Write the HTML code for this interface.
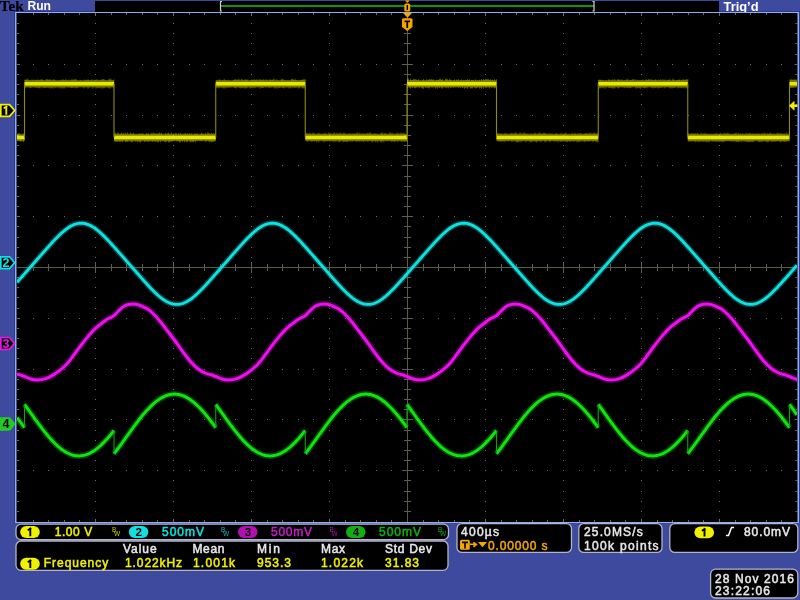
<!DOCTYPE html><html><head><meta charset="utf-8"><style>html,body{margin:0;padding:0;background:#3d4a9e;overflow:hidden}svg{display:block;will-change:transform}text{font-family:"Liberation Sans",sans-serif}</style></head><body>
<svg width="800" height="600" viewBox="0 0 800 600">
<rect x="0" y="0" width="800" height="600" fill="#3d4a9e"/>
<rect x="14" y="11" width="786" height="512" fill="#2c3690"/>
<text x="-0.2" y="11.4" font-weight="bold" font-size="15.6" fill="#000" stroke="#000" stroke-width="0.2" textLength="23.8" lengthAdjust="spacingAndGlyphs" style="font-family:'Liberation Serif'">Tek</text>
<text x="27.5" y="10" font-weight="bold" font-size="12" fill="#fff" textLength="23.5" lengthAdjust="spacingAndGlyphs">Run</text>
<rect x="95" y="1" width="624" height="11" fill="#000"/>
<rect x="221" y="5" width="373" height="2" fill="#109010"/>
<path d="M222,1.5 L220.5,1.5 L220.5,11 L222,11" stroke="#d8d0d0" stroke-width="1.2" fill="none"/>
<path d="M592.5,1.5 L594,1.5 L594,11 L592.5,11" stroke="#d8d0d0" stroke-width="1.2" fill="none"/>
<text x="723.5" y="10.5" font-weight="bold" font-size="12" fill="#fff" textLength="35" lengthAdjust="spacingAndGlyphs">Trig’d</text>
<rect x="15" y="12" width="784" height="511" fill="#8fb0f0"/>
<rect x="16.5" y="13" width="781" height="509" fill="#000"/>
<path d="M95,23h1v1h-1zM95,33h1v1h-1zM95,43h1v1h-1zM95,54h1v1h-1zM95,64h1v1h-1zM95,74h1v1h-1zM95,84h1v1h-1zM95,94h1v1h-1zM95,104h1v1h-1zM95,115h1v1h-1zM95,125h1v1h-1zM95,135h1v1h-1zM95,145h1v1h-1zM95,155h1v1h-1zM95,165h1v1h-1zM95,176h1v1h-1zM95,186h1v1h-1zM95,196h1v1h-1zM95,206h1v1h-1zM95,216h1v1h-1zM95,226h1v1h-1zM95,237h1v1h-1zM95,247h1v1h-1zM95,257h1v1h-1zM95,267h1v1h-1zM95,277h1v1h-1zM95,287h1v1h-1zM95,297h1v1h-1zM95,308h1v1h-1zM95,318h1v1h-1zM95,328h1v1h-1zM95,338h1v1h-1zM95,348h1v1h-1zM95,358h1v1h-1zM95,369h1v1h-1zM95,379h1v1h-1zM95,389h1v1h-1zM95,399h1v1h-1zM95,409h1v1h-1zM95,419h1v1h-1zM95,430h1v1h-1zM95,440h1v1h-1zM95,450h1v1h-1zM95,460h1v1h-1zM95,470h1v1h-1zM95,480h1v1h-1zM95,491h1v1h-1zM95,501h1v1h-1zM95,511h1v1h-1zM173,23h1v1h-1zM173,33h1v1h-1zM173,43h1v1h-1zM173,54h1v1h-1zM173,64h1v1h-1zM173,74h1v1h-1zM173,84h1v1h-1zM173,94h1v1h-1zM173,104h1v1h-1zM173,115h1v1h-1zM173,125h1v1h-1zM173,135h1v1h-1zM173,145h1v1h-1zM173,155h1v1h-1zM173,165h1v1h-1zM173,176h1v1h-1zM173,186h1v1h-1zM173,196h1v1h-1zM173,206h1v1h-1zM173,216h1v1h-1zM173,226h1v1h-1zM173,237h1v1h-1zM173,247h1v1h-1zM173,257h1v1h-1zM173,267h1v1h-1zM173,277h1v1h-1zM173,287h1v1h-1zM173,297h1v1h-1zM173,308h1v1h-1zM173,318h1v1h-1zM173,328h1v1h-1zM173,338h1v1h-1zM173,348h1v1h-1zM173,358h1v1h-1zM173,369h1v1h-1zM173,379h1v1h-1zM173,389h1v1h-1zM173,399h1v1h-1zM173,409h1v1h-1zM173,419h1v1h-1zM173,430h1v1h-1zM173,440h1v1h-1zM173,450h1v1h-1zM173,460h1v1h-1zM173,470h1v1h-1zM173,480h1v1h-1zM173,491h1v1h-1zM173,501h1v1h-1zM173,511h1v1h-1zM251,23h1v1h-1zM251,33h1v1h-1zM251,43h1v1h-1zM251,54h1v1h-1zM251,64h1v1h-1zM251,74h1v1h-1zM251,84h1v1h-1zM251,94h1v1h-1zM251,104h1v1h-1zM251,115h1v1h-1zM251,125h1v1h-1zM251,135h1v1h-1zM251,145h1v1h-1zM251,155h1v1h-1zM251,165h1v1h-1zM251,176h1v1h-1zM251,186h1v1h-1zM251,196h1v1h-1zM251,206h1v1h-1zM251,216h1v1h-1zM251,226h1v1h-1zM251,237h1v1h-1zM251,247h1v1h-1zM251,257h1v1h-1zM251,267h1v1h-1zM251,277h1v1h-1zM251,287h1v1h-1zM251,297h1v1h-1zM251,308h1v1h-1zM251,318h1v1h-1zM251,328h1v1h-1zM251,338h1v1h-1zM251,348h1v1h-1zM251,358h1v1h-1zM251,369h1v1h-1zM251,379h1v1h-1zM251,389h1v1h-1zM251,399h1v1h-1zM251,409h1v1h-1zM251,419h1v1h-1zM251,430h1v1h-1zM251,440h1v1h-1zM251,450h1v1h-1zM251,460h1v1h-1zM251,470h1v1h-1zM251,480h1v1h-1zM251,491h1v1h-1zM251,501h1v1h-1zM251,511h1v1h-1zM329,23h1v1h-1zM329,33h1v1h-1zM329,43h1v1h-1zM329,54h1v1h-1zM329,64h1v1h-1zM329,74h1v1h-1zM329,84h1v1h-1zM329,94h1v1h-1zM329,104h1v1h-1zM329,115h1v1h-1zM329,125h1v1h-1zM329,135h1v1h-1zM329,145h1v1h-1zM329,155h1v1h-1zM329,165h1v1h-1zM329,176h1v1h-1zM329,186h1v1h-1zM329,196h1v1h-1zM329,206h1v1h-1zM329,216h1v1h-1zM329,226h1v1h-1zM329,237h1v1h-1zM329,247h1v1h-1zM329,257h1v1h-1zM329,267h1v1h-1zM329,277h1v1h-1zM329,287h1v1h-1zM329,297h1v1h-1zM329,308h1v1h-1zM329,318h1v1h-1zM329,328h1v1h-1zM329,338h1v1h-1zM329,348h1v1h-1zM329,358h1v1h-1zM329,369h1v1h-1zM329,379h1v1h-1zM329,389h1v1h-1zM329,399h1v1h-1zM329,409h1v1h-1zM329,419h1v1h-1zM329,430h1v1h-1zM329,440h1v1h-1zM329,450h1v1h-1zM329,460h1v1h-1zM329,470h1v1h-1zM329,480h1v1h-1zM329,491h1v1h-1zM329,501h1v1h-1zM329,511h1v1h-1zM485,23h1v1h-1zM485,33h1v1h-1zM485,43h1v1h-1zM485,54h1v1h-1zM485,64h1v1h-1zM485,74h1v1h-1zM485,84h1v1h-1zM485,94h1v1h-1zM485,104h1v1h-1zM485,115h1v1h-1zM485,125h1v1h-1zM485,135h1v1h-1zM485,145h1v1h-1zM485,155h1v1h-1zM485,165h1v1h-1zM485,176h1v1h-1zM485,186h1v1h-1zM485,196h1v1h-1zM485,206h1v1h-1zM485,216h1v1h-1zM485,226h1v1h-1zM485,237h1v1h-1zM485,247h1v1h-1zM485,257h1v1h-1zM485,267h1v1h-1zM485,277h1v1h-1zM485,287h1v1h-1zM485,297h1v1h-1zM485,308h1v1h-1zM485,318h1v1h-1zM485,328h1v1h-1zM485,338h1v1h-1zM485,348h1v1h-1zM485,358h1v1h-1zM485,369h1v1h-1zM485,379h1v1h-1zM485,389h1v1h-1zM485,399h1v1h-1zM485,409h1v1h-1zM485,419h1v1h-1zM485,430h1v1h-1zM485,440h1v1h-1zM485,450h1v1h-1zM485,460h1v1h-1zM485,470h1v1h-1zM485,480h1v1h-1zM485,491h1v1h-1zM485,501h1v1h-1zM485,511h1v1h-1zM563,23h1v1h-1zM563,33h1v1h-1zM563,43h1v1h-1zM563,54h1v1h-1zM563,64h1v1h-1zM563,74h1v1h-1zM563,84h1v1h-1zM563,94h1v1h-1zM563,104h1v1h-1zM563,115h1v1h-1zM563,125h1v1h-1zM563,135h1v1h-1zM563,145h1v1h-1zM563,155h1v1h-1zM563,165h1v1h-1zM563,176h1v1h-1zM563,186h1v1h-1zM563,196h1v1h-1zM563,206h1v1h-1zM563,216h1v1h-1zM563,226h1v1h-1zM563,237h1v1h-1zM563,247h1v1h-1zM563,257h1v1h-1zM563,267h1v1h-1zM563,277h1v1h-1zM563,287h1v1h-1zM563,297h1v1h-1zM563,308h1v1h-1zM563,318h1v1h-1zM563,328h1v1h-1zM563,338h1v1h-1zM563,348h1v1h-1zM563,358h1v1h-1zM563,369h1v1h-1zM563,379h1v1h-1zM563,389h1v1h-1zM563,399h1v1h-1zM563,409h1v1h-1zM563,419h1v1h-1zM563,430h1v1h-1zM563,440h1v1h-1zM563,450h1v1h-1zM563,460h1v1h-1zM563,470h1v1h-1zM563,480h1v1h-1zM563,491h1v1h-1zM563,501h1v1h-1zM563,511h1v1h-1zM641,23h1v1h-1zM641,33h1v1h-1zM641,43h1v1h-1zM641,54h1v1h-1zM641,64h1v1h-1zM641,74h1v1h-1zM641,84h1v1h-1zM641,94h1v1h-1zM641,104h1v1h-1zM641,115h1v1h-1zM641,125h1v1h-1zM641,135h1v1h-1zM641,145h1v1h-1zM641,155h1v1h-1zM641,165h1v1h-1zM641,176h1v1h-1zM641,186h1v1h-1zM641,196h1v1h-1zM641,206h1v1h-1zM641,216h1v1h-1zM641,226h1v1h-1zM641,237h1v1h-1zM641,247h1v1h-1zM641,257h1v1h-1zM641,267h1v1h-1zM641,277h1v1h-1zM641,287h1v1h-1zM641,297h1v1h-1zM641,308h1v1h-1zM641,318h1v1h-1zM641,328h1v1h-1zM641,338h1v1h-1zM641,348h1v1h-1zM641,358h1v1h-1zM641,369h1v1h-1zM641,379h1v1h-1zM641,389h1v1h-1zM641,399h1v1h-1zM641,409h1v1h-1zM641,419h1v1h-1zM641,430h1v1h-1zM641,440h1v1h-1zM641,450h1v1h-1zM641,460h1v1h-1zM641,470h1v1h-1zM641,480h1v1h-1zM641,491h1v1h-1zM641,501h1v1h-1zM641,511h1v1h-1zM719,23h1v1h-1zM719,33h1v1h-1zM719,43h1v1h-1zM719,54h1v1h-1zM719,64h1v1h-1zM719,74h1v1h-1zM719,84h1v1h-1zM719,94h1v1h-1zM719,104h1v1h-1zM719,115h1v1h-1zM719,125h1v1h-1zM719,135h1v1h-1zM719,145h1v1h-1zM719,155h1v1h-1zM719,165h1v1h-1zM719,176h1v1h-1zM719,186h1v1h-1zM719,196h1v1h-1zM719,206h1v1h-1zM719,216h1v1h-1zM719,226h1v1h-1zM719,237h1v1h-1zM719,247h1v1h-1zM719,257h1v1h-1zM719,267h1v1h-1zM719,277h1v1h-1zM719,287h1v1h-1zM719,297h1v1h-1zM719,308h1v1h-1zM719,318h1v1h-1zM719,328h1v1h-1zM719,338h1v1h-1zM719,348h1v1h-1zM719,358h1v1h-1zM719,369h1v1h-1zM719,379h1v1h-1zM719,389h1v1h-1zM719,399h1v1h-1zM719,409h1v1h-1zM719,419h1v1h-1zM719,430h1v1h-1zM719,440h1v1h-1zM719,450h1v1h-1zM719,460h1v1h-1zM719,470h1v1h-1zM719,480h1v1h-1zM719,491h1v1h-1zM719,501h1v1h-1zM719,511h1v1h-1zM33,64h1v1h-1zM48,64h1v1h-1zM64,64h1v1h-1zM79,64h1v1h-1zM111,64h1v1h-1zM126,64h1v1h-1zM142,64h1v1h-1zM157,64h1v1h-1zM189,64h1v1h-1zM204,64h1v1h-1zM220,64h1v1h-1zM235,64h1v1h-1zM267,64h1v1h-1zM282,64h1v1h-1zM298,64h1v1h-1zM313,64h1v1h-1zM345,64h1v1h-1zM360,64h1v1h-1zM376,64h1v1h-1zM391,64h1v1h-1zM423,64h1v1h-1zM438,64h1v1h-1zM454,64h1v1h-1zM469,64h1v1h-1zM501,64h1v1h-1zM516,64h1v1h-1zM532,64h1v1h-1zM547,64h1v1h-1zM579,64h1v1h-1zM594,64h1v1h-1zM610,64h1v1h-1zM625,64h1v1h-1zM657,64h1v1h-1zM672,64h1v1h-1zM688,64h1v1h-1zM703,64h1v1h-1zM735,64h1v1h-1zM750,64h1v1h-1zM766,64h1v1h-1zM781,64h1v1h-1zM33,115h1v1h-1zM48,115h1v1h-1zM64,115h1v1h-1zM79,115h1v1h-1zM111,115h1v1h-1zM126,115h1v1h-1zM142,115h1v1h-1zM157,115h1v1h-1zM189,115h1v1h-1zM204,115h1v1h-1zM220,115h1v1h-1zM235,115h1v1h-1zM267,115h1v1h-1zM282,115h1v1h-1zM298,115h1v1h-1zM313,115h1v1h-1zM345,115h1v1h-1zM360,115h1v1h-1zM376,115h1v1h-1zM391,115h1v1h-1zM423,115h1v1h-1zM438,115h1v1h-1zM454,115h1v1h-1zM469,115h1v1h-1zM501,115h1v1h-1zM516,115h1v1h-1zM532,115h1v1h-1zM547,115h1v1h-1zM579,115h1v1h-1zM594,115h1v1h-1zM610,115h1v1h-1zM625,115h1v1h-1zM657,115h1v1h-1zM672,115h1v1h-1zM688,115h1v1h-1zM703,115h1v1h-1zM735,115h1v1h-1zM750,115h1v1h-1zM766,115h1v1h-1zM781,115h1v1h-1zM33,165h1v1h-1zM48,165h1v1h-1zM64,165h1v1h-1zM79,165h1v1h-1zM111,165h1v1h-1zM126,165h1v1h-1zM142,165h1v1h-1zM157,165h1v1h-1zM189,165h1v1h-1zM204,165h1v1h-1zM220,165h1v1h-1zM235,165h1v1h-1zM267,165h1v1h-1zM282,165h1v1h-1zM298,165h1v1h-1zM313,165h1v1h-1zM345,165h1v1h-1zM360,165h1v1h-1zM376,165h1v1h-1zM391,165h1v1h-1zM423,165h1v1h-1zM438,165h1v1h-1zM454,165h1v1h-1zM469,165h1v1h-1zM501,165h1v1h-1zM516,165h1v1h-1zM532,165h1v1h-1zM547,165h1v1h-1zM579,165h1v1h-1zM594,165h1v1h-1zM610,165h1v1h-1zM625,165h1v1h-1zM657,165h1v1h-1zM672,165h1v1h-1zM688,165h1v1h-1zM703,165h1v1h-1zM735,165h1v1h-1zM750,165h1v1h-1zM766,165h1v1h-1zM781,165h1v1h-1zM33,216h1v1h-1zM48,216h1v1h-1zM64,216h1v1h-1zM79,216h1v1h-1zM111,216h1v1h-1zM126,216h1v1h-1zM142,216h1v1h-1zM157,216h1v1h-1zM189,216h1v1h-1zM204,216h1v1h-1zM220,216h1v1h-1zM235,216h1v1h-1zM267,216h1v1h-1zM282,216h1v1h-1zM298,216h1v1h-1zM313,216h1v1h-1zM345,216h1v1h-1zM360,216h1v1h-1zM376,216h1v1h-1zM391,216h1v1h-1zM423,216h1v1h-1zM438,216h1v1h-1zM454,216h1v1h-1zM469,216h1v1h-1zM501,216h1v1h-1zM516,216h1v1h-1zM532,216h1v1h-1zM547,216h1v1h-1zM579,216h1v1h-1zM594,216h1v1h-1zM610,216h1v1h-1zM625,216h1v1h-1zM657,216h1v1h-1zM672,216h1v1h-1zM688,216h1v1h-1zM703,216h1v1h-1zM735,216h1v1h-1zM750,216h1v1h-1zM766,216h1v1h-1zM781,216h1v1h-1zM33,318h1v1h-1zM48,318h1v1h-1zM64,318h1v1h-1zM79,318h1v1h-1zM111,318h1v1h-1zM126,318h1v1h-1zM142,318h1v1h-1zM157,318h1v1h-1zM189,318h1v1h-1zM204,318h1v1h-1zM220,318h1v1h-1zM235,318h1v1h-1zM267,318h1v1h-1zM282,318h1v1h-1zM298,318h1v1h-1zM313,318h1v1h-1zM345,318h1v1h-1zM360,318h1v1h-1zM376,318h1v1h-1zM391,318h1v1h-1zM423,318h1v1h-1zM438,318h1v1h-1zM454,318h1v1h-1zM469,318h1v1h-1zM501,318h1v1h-1zM516,318h1v1h-1zM532,318h1v1h-1zM547,318h1v1h-1zM579,318h1v1h-1zM594,318h1v1h-1zM610,318h1v1h-1zM625,318h1v1h-1zM657,318h1v1h-1zM672,318h1v1h-1zM688,318h1v1h-1zM703,318h1v1h-1zM735,318h1v1h-1zM750,318h1v1h-1zM766,318h1v1h-1zM781,318h1v1h-1zM33,369h1v1h-1zM48,369h1v1h-1zM64,369h1v1h-1zM79,369h1v1h-1zM111,369h1v1h-1zM126,369h1v1h-1zM142,369h1v1h-1zM157,369h1v1h-1zM189,369h1v1h-1zM204,369h1v1h-1zM220,369h1v1h-1zM235,369h1v1h-1zM267,369h1v1h-1zM282,369h1v1h-1zM298,369h1v1h-1zM313,369h1v1h-1zM345,369h1v1h-1zM360,369h1v1h-1zM376,369h1v1h-1zM391,369h1v1h-1zM423,369h1v1h-1zM438,369h1v1h-1zM454,369h1v1h-1zM469,369h1v1h-1zM501,369h1v1h-1zM516,369h1v1h-1zM532,369h1v1h-1zM547,369h1v1h-1zM579,369h1v1h-1zM594,369h1v1h-1zM610,369h1v1h-1zM625,369h1v1h-1zM657,369h1v1h-1zM672,369h1v1h-1zM688,369h1v1h-1zM703,369h1v1h-1zM735,369h1v1h-1zM750,369h1v1h-1zM766,369h1v1h-1zM781,369h1v1h-1zM33,419h1v1h-1zM48,419h1v1h-1zM64,419h1v1h-1zM79,419h1v1h-1zM111,419h1v1h-1zM126,419h1v1h-1zM142,419h1v1h-1zM157,419h1v1h-1zM189,419h1v1h-1zM204,419h1v1h-1zM220,419h1v1h-1zM235,419h1v1h-1zM267,419h1v1h-1zM282,419h1v1h-1zM298,419h1v1h-1zM313,419h1v1h-1zM345,419h1v1h-1zM360,419h1v1h-1zM376,419h1v1h-1zM391,419h1v1h-1zM423,419h1v1h-1zM438,419h1v1h-1zM454,419h1v1h-1zM469,419h1v1h-1zM501,419h1v1h-1zM516,419h1v1h-1zM532,419h1v1h-1zM547,419h1v1h-1zM579,419h1v1h-1zM594,419h1v1h-1zM610,419h1v1h-1zM625,419h1v1h-1zM657,419h1v1h-1zM672,419h1v1h-1zM688,419h1v1h-1zM703,419h1v1h-1zM735,419h1v1h-1zM750,419h1v1h-1zM766,419h1v1h-1zM781,419h1v1h-1zM33,470h1v1h-1zM48,470h1v1h-1zM64,470h1v1h-1zM79,470h1v1h-1zM111,470h1v1h-1zM126,470h1v1h-1zM142,470h1v1h-1zM157,470h1v1h-1zM189,470h1v1h-1zM204,470h1v1h-1zM220,470h1v1h-1zM235,470h1v1h-1zM267,470h1v1h-1zM282,470h1v1h-1zM298,470h1v1h-1zM313,470h1v1h-1zM345,470h1v1h-1zM360,470h1v1h-1zM376,470h1v1h-1zM391,470h1v1h-1zM423,470h1v1h-1zM438,470h1v1h-1zM454,470h1v1h-1zM469,470h1v1h-1zM501,470h1v1h-1zM516,470h1v1h-1zM532,470h1v1h-1zM547,470h1v1h-1zM579,470h1v1h-1zM594,470h1v1h-1zM610,470h1v1h-1zM625,470h1v1h-1zM657,470h1v1h-1zM672,470h1v1h-1zM688,470h1v1h-1zM703,470h1v1h-1zM735,470h1v1h-1zM750,470h1v1h-1zM766,470h1v1h-1zM781,470h1v1h-1z" fill="#6a6a66"/>
<path d="M33.5,13v2.0M33.5,522v-2.0M48.5,13v2.0M48.5,522v-2.0M64.5,13v2.0M64.5,522v-2.0M79.5,13v2.0M79.5,522v-2.0M95.5,13v3.0M95.5,522v-3.0M111.5,13v2.0M111.5,522v-2.0M126.5,13v2.0M126.5,522v-2.0M142.5,13v2.0M142.5,522v-2.0M157.5,13v2.0M157.5,522v-2.0M173.5,13v3.0M173.5,522v-3.0M189.5,13v2.0M189.5,522v-2.0M204.5,13v2.0M204.5,522v-2.0M220.5,13v2.0M220.5,522v-2.0M235.5,13v2.0M235.5,522v-2.0M251.5,13v3.0M251.5,522v-3.0M267.5,13v2.0M267.5,522v-2.0M282.5,13v2.0M282.5,522v-2.0M298.5,13v2.0M298.5,522v-2.0M313.5,13v2.0M313.5,522v-2.0M329.5,13v3.0M329.5,522v-3.0M345.5,13v2.0M345.5,522v-2.0M360.5,13v2.0M360.5,522v-2.0M376.5,13v2.0M376.5,522v-2.0M391.5,13v2.0M391.5,522v-2.0M407.5,13v3.0M407.5,522v-3.0M423.5,13v2.0M423.5,522v-2.0M438.5,13v2.0M438.5,522v-2.0M454.5,13v2.0M454.5,522v-2.0M469.5,13v2.0M469.5,522v-2.0M485.5,13v3.0M485.5,522v-3.0M501.5,13v2.0M501.5,522v-2.0M516.5,13v2.0M516.5,522v-2.0M532.5,13v2.0M532.5,522v-2.0M547.5,13v2.0M547.5,522v-2.0M563.5,13v3.0M563.5,522v-3.0M579.5,13v2.0M579.5,522v-2.0M594.5,13v2.0M594.5,522v-2.0M610.5,13v2.0M610.5,522v-2.0M625.5,13v2.0M625.5,522v-2.0M641.5,13v3.0M641.5,522v-3.0M657.5,13v2.0M657.5,522v-2.0M672.5,13v2.0M672.5,522v-2.0M688.5,13v2.0M688.5,522v-2.0M703.5,13v2.0M703.5,522v-2.0M719.5,13v3.0M719.5,522v-3.0M735.5,13v2.0M735.5,522v-2.0M750.5,13v2.0M750.5,522v-2.0M766.5,13v2.0M766.5,522v-2.0M781.5,13v2.0M781.5,522v-2.0M17,23.5h2.0M797.5,23.5h-2.0M17,33.5h2.0M797.5,33.5h-2.0M17,43.5h2.0M797.5,43.5h-2.0M17,54.5h2.0M797.5,54.5h-2.0M17,64.5h3.0M797.5,64.5h-3.0M17,74.5h2.0M797.5,74.5h-2.0M17,84.5h2.0M797.5,84.5h-2.0M17,94.5h2.0M797.5,94.5h-2.0M17,104.5h2.0M797.5,104.5h-2.0M17,115.5h3.0M797.5,115.5h-3.0M17,125.5h2.0M797.5,125.5h-2.0M17,135.5h2.0M797.5,135.5h-2.0M17,145.5h2.0M797.5,145.5h-2.0M17,155.5h2.0M797.5,155.5h-2.0M17,165.5h3.0M797.5,165.5h-3.0M17,176.5h2.0M797.5,176.5h-2.0M17,186.5h2.0M797.5,186.5h-2.0M17,196.5h2.0M797.5,196.5h-2.0M17,206.5h2.0M797.5,206.5h-2.0M17,216.5h3.0M797.5,216.5h-3.0M17,226.5h2.0M797.5,226.5h-2.0M17,237.5h2.0M797.5,237.5h-2.0M17,247.5h2.0M797.5,247.5h-2.0M17,257.5h2.0M797.5,257.5h-2.0M17,267.5h3.0M797.5,267.5h-3.0M17,277.5h2.0M797.5,277.5h-2.0M17,287.5h2.0M797.5,287.5h-2.0M17,297.5h2.0M797.5,297.5h-2.0M17,308.5h2.0M797.5,308.5h-2.0M17,318.5h3.0M797.5,318.5h-3.0M17,328.5h2.0M797.5,328.5h-2.0M17,338.5h2.0M797.5,338.5h-2.0M17,348.5h2.0M797.5,348.5h-2.0M17,358.5h2.0M797.5,358.5h-2.0M17,369.5h3.0M797.5,369.5h-3.0M17,379.5h2.0M797.5,379.5h-2.0M17,389.5h2.0M797.5,389.5h-2.0M17,399.5h2.0M797.5,399.5h-2.0M17,409.5h2.0M797.5,409.5h-2.0M17,419.5h3.0M797.5,419.5h-3.0M17,430.5h2.0M797.5,430.5h-2.0M17,440.5h2.0M797.5,440.5h-2.0M17,450.5h2.0M797.5,450.5h-2.0M17,460.5h2.0M797.5,460.5h-2.0M17,470.5h3.0M797.5,470.5h-3.0M17,480.5h2.0M797.5,480.5h-2.0M17,491.5h2.0M797.5,491.5h-2.0M17,501.5h2.0M797.5,501.5h-2.0M17,511.5h2.0M797.5,511.5h-2.0" stroke="#6a6a66" stroke-width="1" fill="none"/>
<path d="M17,267.5H797M407.5,13V522" stroke="#5a5c40" stroke-width="1" fill="none"/>
<path d="M33.5,264.0v7.0M48.5,264.0v7.0M64.5,264.0v7.0M79.5,264.0v7.0M95.5,262.0v11.0M111.5,264.0v7.0M126.5,264.0v7.0M142.5,264.0v7.0M157.5,264.0v7.0M173.5,262.0v11.0M189.5,264.0v7.0M204.5,264.0v7.0M220.5,264.0v7.0M235.5,264.0v7.0M251.5,262.0v11.0M267.5,264.0v7.0M282.5,264.0v7.0M298.5,264.0v7.0M313.5,264.0v7.0M329.5,262.0v11.0M345.5,264.0v7.0M360.5,264.0v7.0M376.5,264.0v7.0M391.5,264.0v7.0M407.5,262.0v11.0M423.5,264.0v7.0M438.5,264.0v7.0M454.5,264.0v7.0M469.5,264.0v7.0M485.5,262.0v11.0M501.5,264.0v7.0M516.5,264.0v7.0M532.5,264.0v7.0M547.5,264.0v7.0M563.5,262.0v11.0M579.5,264.0v7.0M594.5,264.0v7.0M610.5,264.0v7.0M625.5,264.0v7.0M641.5,262.0v11.0M657.5,264.0v7.0M672.5,264.0v7.0M688.5,264.0v7.0M703.5,264.0v7.0M719.5,262.0v11.0M735.5,264.0v7.0M750.5,264.0v7.0M766.5,264.0v7.0M781.5,264.0v7.0M404.0,23.5h7.0M404.0,33.5h7.0M404.0,43.5h7.0M404.0,54.5h7.0M402.0,64.5h11.0M404.0,74.5h7.0M404.0,84.5h7.0M404.0,94.5h7.0M404.0,104.5h7.0M402.0,115.5h11.0M404.0,125.5h7.0M404.0,135.5h7.0M404.0,145.5h7.0M404.0,155.5h7.0M402.0,165.5h11.0M404.0,176.5h7.0M404.0,186.5h7.0M404.0,196.5h7.0M404.0,206.5h7.0M402.0,216.5h11.0M404.0,226.5h7.0M404.0,237.5h7.0M404.0,247.5h7.0M404.0,257.5h7.0M402.0,267.5h11.0M404.0,277.5h7.0M404.0,287.5h7.0M404.0,297.5h7.0M404.0,308.5h7.0M402.0,318.5h11.0M404.0,328.5h7.0M404.0,338.5h7.0M404.0,348.5h7.0M404.0,358.5h7.0M402.0,369.5h11.0M404.0,379.5h7.0M404.0,389.5h7.0M404.0,399.5h7.0M404.0,409.5h7.0M402.0,419.5h11.0M404.0,430.5h7.0M404.0,440.5h7.0M404.0,450.5h7.0M404.0,460.5h7.0M402.0,470.5h11.0M404.0,480.5h7.0M404.0,491.5h7.0M404.0,501.5h7.0M404.0,511.5h7.0" stroke="#5e5e52" stroke-width="1" fill="none"/>
<clipPath id="gc"><rect x="17" y="13" width="780" height="509"/></clipPath>
<g fill="none" stroke-linejoin="round" stroke-linecap="butt" clip-path="url(#gc)">
<path d="M17.5,133.92V140.63M18.5,133.14V140.46M19.5,133.41V141.10M20.5,134.56V141.42M21.5,134.61V141.25M22.5,134.53V140.50M23.5,133.68V142.12M24.5,134.40V140.79M25.0,79.49V88.68M26.0,79.61V87.47M27.0,78.66V86.70M28.0,78.94V87.24M29.0,80.65V86.86M30.0,80.26V88.40M31.0,80.57V87.88M32.0,79.47V87.42M33.0,79.69V86.74M34.0,80.86V87.05M35.0,79.37V87.54M36.0,80.25V87.89M37.0,79.91V87.26M38.0,79.09V88.14M39.0,80.41V87.86M40.0,79.74V88.53M41.0,79.25V87.23M42.0,78.65V86.86M43.0,80.00V88.27M44.0,80.64V87.68M45.0,80.91V88.07M46.0,79.17V87.86M47.0,78.90V87.29M48.0,79.33V87.91M49.0,79.61V87.60M50.0,78.98V88.68M51.0,79.86V88.06M52.0,80.85V88.14M53.0,79.45V88.78M54.0,79.03V87.23M55.0,80.07V88.07M56.0,80.95V87.62M57.0,80.60V86.86M58.0,80.86V88.29M59.0,80.69V87.14M60.0,80.06V88.52M61.0,80.81V87.59M62.0,79.68V88.54M63.0,79.03V88.50M64.0,80.33V87.51M65.0,80.14V88.55M66.0,78.70V86.93M67.0,80.58V87.11M68.0,80.44V87.67M69.0,79.59V87.18M70.0,80.99V87.52M71.0,80.11V87.85M72.0,78.71V88.12M73.0,79.76V87.96M74.0,79.38V86.72M75.0,78.84V88.32M76.0,78.90V88.36M77.0,80.06V87.48M78.0,80.75V88.00M79.0,80.85V86.75M80.0,80.50V86.96M81.0,80.18V86.72M82.0,81.00V86.93M83.0,80.76V87.40M84.0,80.94V88.52M85.0,79.53V86.93M86.0,80.39V87.36M87.0,80.13V86.87M88.0,78.96V88.78M89.0,79.88V87.66M90.0,80.79V86.82M91.0,80.18V87.18M92.0,79.01V86.96M93.0,80.94V88.69M94.0,79.73V86.92M95.0,79.70V86.66M96.0,79.73V88.75M97.0,78.93V88.13M98.0,80.37V87.41M99.0,80.60V88.30M100.0,79.72V88.31M101.0,80.21V87.09M102.0,79.05V88.77M103.0,78.95V88.37M104.0,79.04V88.23M105.0,80.46V87.74M106.0,80.15V86.66M107.0,80.93V87.21M108.0,80.38V88.12M109.0,78.70V87.58M110.0,78.75V88.77M111.0,78.71V87.40M112.0,80.47V87.10M113.0,80.53V87.05M114.0,79.50V88.58M114.5,132.68V141.35M115.5,133.13V142.06M116.5,134.50V141.75M117.5,132.52V142.02M118.5,132.90V141.35M119.5,134.27V142.04M120.5,133.90V142.06M121.5,132.37V141.17M122.5,133.74V142.38M123.5,132.96V140.67M124.5,134.40V140.63M125.5,132.53V142.07M126.5,134.35V142.12M127.5,132.35V141.75M128.5,133.86V141.51M129.5,134.39V140.33M130.5,132.37V141.73M131.5,133.44V142.35M132.5,133.66V142.22M133.5,132.72V140.76M134.5,134.10V140.94M135.5,134.12V141.59M136.5,134.08V141.22M137.5,134.39V142.30M138.5,133.85V141.31M139.5,133.30V142.29M140.5,133.69V142.32M141.5,133.50V141.47M142.5,133.44V140.34M143.5,133.64V140.70M144.5,134.69V142.06M145.5,134.29V141.34M146.5,132.96V141.52M147.5,133.92V141.44M148.5,133.37V142.03M149.5,134.45V141.53M150.5,134.10V140.91M151.5,132.85V141.42M152.5,133.35V141.97M153.5,132.51V141.28M154.5,133.23V141.41M155.5,133.47V141.82M156.5,133.61V141.47M157.5,133.55V142.37M158.5,133.02V142.23M159.5,132.44V140.87M160.5,133.36V142.38M161.5,132.68V140.60M162.5,134.41V141.27M163.5,134.53V140.83M164.5,134.52V141.77M165.5,132.82V142.27M166.5,134.33V141.88M167.5,133.12V140.61M168.5,132.58V142.43M169.5,134.17V142.40M170.5,133.74V141.37M171.5,132.32V142.13M172.5,134.31V141.25M173.5,133.46V141.05M174.5,134.23V141.00M175.5,132.97V140.34M176.5,133.37V141.27M177.5,134.66V141.03M178.5,133.20V141.43M179.5,134.55V142.47M180.5,132.81V142.44M181.5,134.45V140.88M182.5,134.60V142.01M183.5,134.05V140.59M184.5,133.69V142.31M185.5,132.73V140.87M186.5,134.34V142.32M187.5,133.33V141.84M188.5,134.49V140.43M189.5,133.05V141.24M190.5,134.53V142.36M191.5,133.18V142.06M192.5,134.50V142.18M193.5,134.54V142.20M194.5,133.61V141.05M195.5,133.37V142.34M196.5,134.06V140.58M197.5,133.44V140.82M198.5,134.44V140.66M199.5,134.58V140.74M200.5,133.95V140.97M201.5,132.88V140.94M202.5,133.50V140.69M203.5,133.87V140.34M204.5,134.10V140.33M205.5,132.94V141.51M206.5,134.25V141.34M207.5,132.46V140.53M208.5,132.73V141.25M209.5,133.51V142.14M210.5,133.76V141.41M211.5,133.05V142.46M212.5,133.88V142.13M213.5,133.00V141.70M214.5,133.73V141.06M215.5,134.57V140.59M216.2,80.83V88.23M217.2,80.39V86.96M218.2,80.80V88.45M219.2,78.91V88.08M220.2,80.32V87.13M221.2,80.30V87.61M222.2,80.62V87.58M223.2,80.37V88.72M224.2,78.67V87.80M225.2,80.41V88.72M226.2,80.26V87.38M227.2,81.00V87.44M228.2,79.86V87.71M229.2,80.52V87.71M230.2,80.99V87.18M231.2,80.78V87.48M232.2,80.90V86.65M233.2,80.27V87.11M234.2,79.59V87.76M235.2,79.20V88.05M236.2,79.28V88.53M237.2,80.07V87.32M238.2,78.64V86.93M239.2,79.26V88.02M240.2,80.89V88.44M241.2,78.86V87.98M242.2,79.24V88.39M243.2,80.67V87.75M244.2,79.79V88.44M245.2,79.07V88.42M246.2,79.60V88.56M247.2,79.36V88.13M248.2,80.45V86.67M249.2,80.68V87.39M250.2,80.75V88.44M251.2,79.66V87.98M252.2,79.50V88.10M253.2,79.83V86.61M254.2,79.09V88.25M255.2,79.79V87.78M256.2,79.42V86.75M257.2,79.23V87.15M258.2,80.82V87.18M259.2,79.25V87.05M260.2,79.22V88.75M261.2,79.81V87.44M262.2,79.85V88.10M263.2,79.16V87.96M264.2,79.46V86.77M265.2,80.65V87.16M266.2,79.22V87.27M267.2,79.64V86.63M268.2,80.85V87.19M269.2,79.39V88.12M270.2,79.38V87.24M271.2,79.76V87.62M272.2,79.88V86.86M273.2,78.86V87.04M274.2,78.65V88.66M275.2,80.96V87.61M276.2,79.03V88.73M277.2,79.92V87.19M278.2,80.50V88.68M279.2,80.49V87.88M280.2,80.66V87.75M281.2,78.71V86.89M282.2,79.03V87.72M283.2,78.87V88.15M284.2,80.44V88.57M285.2,79.83V86.65M286.2,80.99V87.68M287.2,79.92V87.26M288.2,80.66V87.36M289.2,80.24V88.45M290.2,81.00V88.25M291.2,78.99V86.86M292.2,78.78V88.17M293.2,78.84V87.24M294.2,80.11V87.46M295.2,78.60V87.90M296.2,80.13V87.54M297.2,80.34V86.71M298.2,80.76V88.44M299.2,80.31V88.66M300.2,80.40V87.18M301.2,79.77V87.02M302.2,80.10V88.70M303.2,78.88V88.39M304.2,79.49V88.61M305.2,78.74V87.81M305.8,132.97V140.41M306.8,132.94V141.29M307.8,132.89V141.72M308.8,134.01V140.41M309.8,132.48V140.58M310.8,133.57V141.06M311.8,133.99V141.93M312.8,132.36V140.87M313.8,133.13V140.96M314.8,133.36V141.17M315.8,134.30V140.66M316.8,134.20V142.29M317.8,133.51V140.78M318.8,132.52V142.49M319.8,133.62V140.61M320.8,134.24V140.50M321.8,133.88V140.50M322.8,134.13V140.87M323.8,133.33V142.25M324.8,132.90V141.21M325.8,133.71V141.45M326.8,133.80V141.04M327.8,134.55V140.91M328.8,132.38V140.58M329.8,133.49V141.69M330.8,132.63V140.78M331.8,134.05V140.85M332.8,133.74V141.28M333.8,132.41V142.17M334.8,132.61V140.35M335.8,134.62V141.86M336.8,132.55V141.34M337.8,133.29V140.30M338.8,133.76V142.34M339.8,132.72V142.18M340.8,132.37V140.85M341.8,134.44V140.64M342.8,133.45V141.80M343.8,132.44V141.89M344.8,133.15V141.98M345.8,133.60V141.51M346.8,134.61V142.02M347.8,134.14V142.32M348.8,133.15V140.97M349.8,134.39V140.85M350.8,133.17V141.84M351.8,134.43V140.45M352.8,133.44V141.58M353.8,133.77V140.79M354.8,133.26V140.32M355.8,133.98V141.31M356.8,132.40V141.72M357.8,132.58V141.35M358.8,134.14V140.84M359.8,132.39V141.85M360.8,133.96V140.35M361.8,133.50V141.78M362.8,133.69V140.87M363.8,133.10V142.34M364.8,134.16V140.38M365.8,133.89V141.23M366.8,133.06V140.74M367.8,132.79V141.93M368.8,133.49V140.75M369.8,132.37V140.99M370.8,132.73V140.81M371.8,134.17V141.97M372.8,133.99V142.39M373.8,133.51V140.71M374.8,134.16V141.22M375.8,133.10V142.39M376.8,134.35V141.17M377.8,134.19V142.44M378.8,134.36V140.41M379.8,134.56V141.17M380.8,132.54V142.24M381.8,132.94V142.49M382.8,132.46V141.02M383.8,134.25V142.36M384.8,132.91V140.37M385.8,133.11V141.13M386.8,133.80V141.03M387.8,134.29V140.31M388.8,134.03V141.07M389.8,132.41V140.57M390.8,132.39V140.76M391.8,133.84V142.11M392.8,132.73V141.25M393.8,134.58V141.34M394.8,133.81V142.32M395.8,134.24V141.10M396.8,132.55V140.37M397.8,133.71V142.09M398.8,132.86V140.39M399.8,134.62V140.44M400.8,132.49V140.87M401.8,132.91V142.28M402.8,133.89V140.90M403.8,132.40V141.66M404.8,134.07V141.88M405.8,133.94V140.91M406.8,134.69V141.96M407.5,78.80V87.99M408.5,78.74V86.65M409.5,80.44V87.65M410.5,78.70V88.70M411.5,80.07V87.15M412.5,79.97V87.69M413.5,78.77V87.00M414.5,79.07V88.22M415.5,79.03V88.30M416.5,79.54V87.32M417.5,80.23V87.40M418.5,79.12V86.77M419.5,80.53V88.26M420.5,80.41V86.74M421.5,80.92V87.82M422.5,80.22V88.76M423.5,78.88V88.77M424.5,80.36V86.78M425.5,80.77V87.70M426.5,79.30V87.58M427.5,80.44V87.52M428.5,79.51V88.08M429.5,79.20V88.46M430.5,79.41V86.87M431.5,78.98V87.25M432.5,79.64V87.42M433.5,79.23V87.04M434.5,80.41V87.14M435.5,80.63V88.55M436.5,79.61V87.32M437.5,80.05V88.78M438.5,79.78V87.11M439.5,79.06V88.04M440.5,78.62V86.83M441.5,79.86V88.40M442.5,78.98V88.61M443.5,80.90V87.25M444.5,80.71V87.02M445.5,78.66V87.88M446.5,78.77V87.42M447.5,78.92V87.59M448.5,80.38V88.31M449.5,78.73V86.83M450.5,79.57V87.96M451.5,80.48V87.41M452.5,80.66V87.05M453.5,80.39V87.92M454.5,79.44V87.05M455.5,80.97V87.32M456.5,79.37V87.01M457.5,80.25V87.05M458.5,79.09V87.81M459.5,80.85V86.82M460.5,80.05V87.81M461.5,79.47V86.80M462.5,80.61V88.13M463.5,80.02V87.22M464.5,80.26V88.70M465.5,80.25V87.85M466.5,80.14V87.52M467.5,78.93V88.79M468.5,80.13V87.03M469.5,79.25V87.05M470.5,80.99V88.58M471.5,79.98V88.40M472.5,80.03V88.54M473.5,79.89V86.96M474.5,80.96V87.81M475.5,79.46V88.60M476.5,80.79V87.97M477.5,80.11V87.71M478.5,80.65V87.22M479.5,79.75V88.64M480.5,80.74V87.68M481.5,79.07V88.73M482.5,80.53V86.88M483.5,78.74V88.75M484.5,79.84V86.72M485.5,78.78V87.45M486.5,78.83V87.96M487.5,79.02V86.95M488.5,79.11V87.09M489.5,80.03V88.46M490.5,79.01V87.00M491.5,80.48V87.48M492.5,79.76V87.44M493.5,80.70V87.14M494.5,79.26V88.57M495.5,80.90V87.84M496.5,79.18V86.68M497.0,132.69V140.56M498.0,133.26V141.51M499.0,133.20V140.97M500.0,133.69V141.58M501.0,133.68V141.75M502.0,133.63V141.26M503.0,134.64V141.66M504.0,133.53V140.82M505.0,132.87V142.02M506.0,133.60V140.70M507.0,133.56V140.54M508.0,134.39V141.25M509.0,134.48V141.27M510.0,133.48V140.39M511.0,133.17V140.48M512.0,132.94V142.01M513.0,133.47V140.42M514.0,133.49V141.13M515.0,132.42V140.60M516.0,132.64V142.49M517.0,132.94V142.09M518.0,134.24V142.46M519.0,133.52V142.40M520.0,132.50V140.66M521.0,132.81V142.35M522.0,134.54V141.07M523.0,132.89V140.65M524.0,132.55V140.90M525.0,132.74V140.62M526.0,133.49V142.32M527.0,134.20V140.88M528.0,133.49V141.00M529.0,134.61V140.70M530.0,134.31V142.36M531.0,133.07V142.27M532.0,134.30V142.03M533.0,134.42V141.47M534.0,133.17V141.09M535.0,132.60V141.52M536.0,133.31V142.24M537.0,134.45V142.48M538.0,133.19V141.17M539.0,132.79V140.88M540.0,132.32V141.57M541.0,133.84V141.98M542.0,133.64V140.69M543.0,132.92V140.41M544.0,132.73V140.86M545.0,133.17V142.46M546.0,133.29V141.76M547.0,133.95V140.30M548.0,134.62V140.63M549.0,133.22V141.25M550.0,133.47V142.27M551.0,134.38V140.80M552.0,133.13V140.35M553.0,134.69V141.08M554.0,134.44V141.09M555.0,134.16V141.58M556.0,133.29V140.75M557.0,133.20V141.34M558.0,134.38V142.36M559.0,134.12V140.63M560.0,134.47V141.70M561.0,132.61V142.02M562.0,133.74V140.88M563.0,134.67V141.72M564.0,133.35V141.07M565.0,133.15V141.28M566.0,132.45V141.91M567.0,134.10V142.29M568.0,134.59V141.47M569.0,133.73V140.82M570.0,134.56V142.01M571.0,134.67V141.51M572.0,132.44V140.61M573.0,134.22V141.64M574.0,133.48V141.71M575.0,132.75V140.68M576.0,133.96V140.96M577.0,134.58V142.26M578.0,132.82V141.87M579.0,134.68V142.16M580.0,132.91V141.32M581.0,132.92V141.30M582.0,134.16V140.53M583.0,134.14V140.39M584.0,133.89V141.95M585.0,133.03V142.16M586.0,132.99V140.89M587.0,133.37V141.26M588.0,132.81V141.45M589.0,134.06V141.71M590.0,132.38V140.78M591.0,132.59V140.33M592.0,134.08V140.82M593.0,132.91V142.38M594.0,132.91V141.02M595.0,132.59V141.02M596.0,134.13V142.30M597.0,133.19V141.82M598.0,133.10V142.45M598.8,79.87V88.45M599.8,79.33V88.49M600.8,79.95V88.19M601.8,79.63V87.28M602.8,80.49V87.97M603.8,80.81V88.60M604.8,80.65V86.66M605.8,80.74V88.64M606.8,80.17V86.91M607.8,80.93V86.69M608.8,79.34V87.99M609.8,79.33V88.22M610.8,80.84V87.90M611.8,80.13V88.40M612.8,79.03V88.56M613.8,80.84V88.51M614.8,78.81V88.68M615.8,80.74V87.05M616.8,80.73V86.68M617.8,78.97V88.39M618.8,79.48V88.42M619.8,79.48V87.23M620.8,80.76V86.82M621.8,79.18V87.05M622.8,80.23V87.53M623.8,80.95V87.16M624.8,80.32V88.17M625.8,80.12V87.31M626.8,78.69V87.71M627.8,78.96V87.96M628.8,80.93V87.51M629.8,79.95V88.30M630.8,80.17V88.15M631.8,79.71V87.08M632.8,78.93V86.80M633.8,79.03V86.97M634.8,81.00V87.04M635.8,79.17V88.75M636.8,80.99V87.68M637.8,79.82V88.35M638.8,80.56V87.69M639.8,80.17V88.43M640.8,80.37V88.68M641.8,80.32V87.07M642.8,79.32V87.70M643.8,80.74V88.00M644.8,80.81V88.33M645.8,79.33V88.33M646.8,79.49V87.38M647.8,80.04V87.47M648.8,78.86V86.79M649.8,78.87V86.66M650.8,80.51V87.18M651.8,78.84V87.70M652.8,80.09V88.54M653.8,80.44V87.61M654.8,79.72V88.26M655.8,79.19V88.02M656.8,80.16V87.32M657.8,80.63V88.45M658.8,79.41V88.23M659.8,80.59V87.57M660.8,79.14V87.87M661.8,80.70V87.62M662.8,78.88V87.12M663.8,80.54V87.26M664.8,79.31V88.46M665.8,80.63V86.94M666.8,80.41V87.32M667.8,79.75V86.95M668.8,80.21V87.02M669.8,78.66V88.20M670.8,80.76V88.72M671.8,80.76V87.45M672.8,78.64V88.35M673.8,79.24V87.56M674.8,80.53V88.00M675.8,80.74V87.05M676.8,80.07V86.67M677.8,80.04V88.34M678.8,79.34V87.70M679.8,79.48V87.62M680.8,80.66V87.93M681.8,80.03V88.23M682.8,78.82V87.55M683.8,79.62V88.25M684.8,79.99V87.10M685.8,79.27V88.54M686.8,79.14V88.14M687.8,78.95V88.10M688.2,133.16V141.30M689.2,133.95V141.68M690.2,134.47V141.22M691.2,132.82V141.87M692.2,133.19V140.85M693.2,133.68V141.30M694.2,133.21V141.20M695.2,133.08V142.35M696.2,134.26V141.74M697.2,132.83V141.16M698.2,133.52V142.44M699.2,134.61V141.50M700.2,134.31V142.02M701.2,132.44V141.44M702.2,134.46V141.56M703.2,133.40V141.88M704.2,133.47V141.71M705.2,132.71V141.45M706.2,133.72V142.39M707.2,134.20V141.81M708.2,133.76V141.98M709.2,134.41V142.47M710.2,133.85V140.42M711.2,134.04V141.18M712.2,134.67V141.22M713.2,133.69V141.84M714.2,133.85V140.88M715.2,134.16V141.93M716.2,132.44V141.46M717.2,134.17V142.06M718.2,133.76V140.77M719.2,134.39V142.01M720.2,132.76V141.70M721.2,133.57V141.54M722.2,134.16V142.42M723.2,133.85V141.71M724.2,132.74V142.10M725.2,133.58V140.95M726.2,133.38V140.58M727.2,132.70V141.08M728.2,132.66V140.89M729.2,133.80V140.86M730.2,133.68V140.71M731.2,134.69V141.89M732.2,134.03V140.84M733.2,133.98V141.36M734.2,133.67V141.70M735.2,133.12V141.10M736.2,132.47V142.18M737.2,134.56V142.12M738.2,132.53V142.02M739.2,134.36V142.13M740.2,133.18V140.33M741.2,134.67V142.39M742.2,133.13V140.85M743.2,134.46V140.61M744.2,134.14V142.01M745.2,133.87V140.64M746.2,132.53V142.04M747.2,134.30V142.26M748.2,133.24V142.02M749.2,133.10V142.27M750.2,132.81V142.15M751.2,134.23V141.82M752.2,133.43V141.93M753.2,133.65V142.24M754.2,133.37V140.88M755.2,134.14V140.61M756.2,133.52V140.43M757.2,133.58V140.62M758.2,133.52V141.40M759.2,133.41V142.20M760.2,134.68V142.15M761.2,133.58V141.54M762.2,133.10V142.15M763.2,133.80V141.22M764.2,132.39V140.47M765.2,133.17V141.70M766.2,134.63V141.64M767.2,133.06V142.35M768.2,133.91V142.46M769.2,133.47V141.37M770.2,132.55V140.37M771.2,132.98V141.68M772.2,133.89V142.20M773.2,133.82V141.34M774.2,133.44V142.00M775.2,134.19V141.26M776.2,133.69V141.52M777.2,132.72V140.94M778.2,132.71V141.19M779.2,133.49V140.90M780.2,133.48V142.44M781.2,133.13V142.04M782.2,133.91V141.00M783.2,133.98V141.59M784.2,133.18V142.03M785.2,134.60V141.89M786.2,132.57V141.50M787.2,134.58V140.96M788.2,134.69V140.72M789.2,132.49V141.64M790.0,79.42V88.34M791.0,78.82V87.95M792.0,79.52V87.98M793.0,79.33V87.91M794.0,79.37V87.07M795.0,79.40V87.61M796.0,79.17V86.82M797.0,80.56V86.68" stroke="#d8d800" stroke-opacity="0.36" stroke-width="1"/>
<path d="M17.00,137.50H24.50M24.50,83.80H114.00M114.00,137.50H215.75M215.75,83.80H305.25M305.25,137.50H407.00M407.00,83.80H496.50M496.50,137.50H598.25M598.25,83.80H687.75M687.75,137.50H789.50M789.50,83.80H797.00" stroke="#e0e000" stroke-opacity="0.32" stroke-width="7.4"/>
<path d="M17.00,137.50H24.50M24.50,83.80H114.00M114.00,137.50H215.75M215.75,83.80H305.25M305.25,137.50H407.00M407.00,83.80H496.50M496.50,137.50H598.25M598.25,83.80H687.75M687.75,137.50H789.50M789.50,83.80H797.00" stroke="#e8e800" stroke-width="3.4"/>
<path d="M24.50,83.8V137.5M114.00,83.8V137.5M215.75,83.8V137.5M305.25,83.8V137.5M407.00,83.8V137.5M496.50,83.8V137.5M598.25,83.8V137.5M687.75,83.8V137.5M789.50,83.8V137.5" stroke="#8c8c00" stroke-width="1.1"/>
<path d="M17.00,282.29 L18.00,281.18 L19.00,280.06 L20.00,278.94 L21.00,277.81 L22.00,276.68 L23.00,275.55 L24.00,274.41 L24.50,273.85M24.50,273.85 L25.50,272.71 L26.50,271.57 L27.50,270.44 L28.50,269.30 L29.50,268.16 L30.50,267.03 L31.50,265.89 L32.50,264.75 L33.50,263.62 L34.50,262.48 L35.50,261.34 L36.50,260.20 L37.50,259.07 L38.50,257.93 L39.50,256.79 L40.50,255.66 L41.50,254.52 L42.50,253.38 L43.50,252.25 L44.50,251.12 L45.50,249.99 L46.50,248.86 L47.50,247.73 L48.50,246.61 L49.50,245.50 L50.50,244.39 L51.50,243.29 L52.50,242.20 L53.50,241.12 L54.50,240.06 L55.50,239.01 L56.50,237.97 L57.50,236.95 L58.50,235.96 L59.50,234.98 L60.50,234.03 L61.50,233.11 L62.50,232.21 L63.50,231.34 L64.50,230.51 L65.50,229.71 L66.50,228.95 L67.50,228.23 L68.50,227.55 L69.50,226.91 L70.50,226.32 L71.50,225.78 L72.50,225.28 L73.50,224.83 L74.50,224.44 L75.50,224.10 L76.50,223.81 L77.50,223.58 L78.50,223.40 L79.50,223.28 L80.50,223.21 L81.50,223.20 L82.50,223.25 L83.50,223.36 L84.50,223.52 L85.50,223.73 L86.50,224.01 L87.50,224.33 L88.50,224.71 L89.50,225.14 L90.50,225.62 L91.50,226.15 L92.50,226.73 L93.50,227.36 L94.50,228.02 L95.50,228.73 L96.50,229.48 L97.50,230.27 L98.50,231.09 L99.50,231.95 L100.50,232.83 L101.50,233.75 L102.50,234.69 L103.50,235.66 L104.50,236.65 L105.50,237.66 L106.50,238.69 L107.50,239.74 L108.50,240.80 L109.50,241.88 L110.50,242.97 L111.50,244.06 L112.50,245.17 L113.50,246.28 L114.00,246.84M114.00,246.84 L115.00,247.96 L116.00,249.08 L117.00,250.21 L118.00,251.34 L119.00,252.48 L120.00,253.61 L121.00,254.75 L122.00,255.88 L123.00,257.02 L124.00,258.16 L125.00,259.30 L126.00,260.43 L127.00,261.57 L128.00,262.71 L129.00,263.84 L130.00,264.98 L131.00,266.12 L132.00,267.25 L133.00,268.39 L134.00,269.53 L135.00,270.66 L136.00,271.80 L137.00,272.94 L138.00,274.07 L139.00,275.21 L140.00,276.34 L141.00,277.47 L142.00,278.60 L143.00,279.73 L144.00,280.85 L145.00,281.96 L146.00,283.07 L147.00,284.17 L148.00,285.26 L149.00,286.34 L150.00,287.41 L151.00,288.46 L152.00,289.50 L153.00,290.52 L154.00,291.52 L155.00,292.50 L156.00,293.45 L157.00,294.38 L158.00,295.28 L159.00,296.15 L160.00,296.99 L161.00,297.79 L162.00,298.55 L163.00,299.28 L164.00,299.97 L165.00,300.61 L166.00,301.21 L167.00,301.76 L168.00,302.26 L169.00,302.71 L170.00,303.11 L171.00,303.46 L172.00,303.76 L173.00,304.00 L174.00,304.18 L175.00,304.31 L176.00,304.38 L177.00,304.40 L178.00,304.36 L179.00,304.26 L180.00,304.11 L181.00,303.90 L182.00,303.63 L183.00,303.31 L184.00,302.94 L185.00,302.51 L186.00,302.04 L187.00,301.52 L188.00,300.94 L189.00,300.33 L190.00,299.66 L191.00,298.96 L192.00,298.22 L193.00,297.43 L194.00,296.61 L195.00,295.76 L196.00,294.88 L197.00,293.97 L198.00,293.03 L199.00,292.06 L200.00,291.07 L201.00,290.06 L202.00,289.04 L203.00,287.99 L204.00,286.93 L205.00,285.86 L206.00,284.77 L207.00,283.68 L208.00,282.57 L209.00,281.46 L210.00,280.34 L211.00,279.22 L212.00,278.09 L213.00,276.96 L214.00,275.83 L215.00,274.70 L215.75,273.85M215.75,273.85 L216.75,272.71 L217.75,271.57 L218.75,270.44 L219.75,269.30 L220.75,268.16 L221.75,267.03 L222.75,265.89 L223.75,264.75 L224.75,263.62 L225.75,262.48 L226.75,261.34 L227.75,260.20 L228.75,259.07 L229.75,257.93 L230.75,256.79 L231.75,255.66 L232.75,254.52 L233.75,253.38 L234.75,252.25 L235.75,251.12 L236.75,249.99 L237.75,248.86 L238.75,247.73 L239.75,246.61 L240.75,245.50 L241.75,244.39 L242.75,243.29 L243.75,242.20 L244.75,241.12 L245.75,240.06 L246.75,239.01 L247.75,237.97 L248.75,236.95 L249.75,235.96 L250.75,234.98 L251.75,234.03 L252.75,233.11 L253.75,232.21 L254.75,231.34 L255.75,230.51 L256.75,229.71 L257.75,228.95 L258.75,228.23 L259.75,227.55 L260.75,226.91 L261.75,226.32 L262.75,225.78 L263.75,225.28 L264.75,224.83 L265.75,224.44 L266.75,224.10 L267.75,223.81 L268.75,223.58 L269.75,223.40 L270.75,223.28 L271.75,223.21 L272.75,223.20 L273.75,223.25 L274.75,223.36 L275.75,223.52 L276.75,223.73 L277.75,224.01 L278.75,224.33 L279.75,224.71 L280.75,225.14 L281.75,225.62 L282.75,226.15 L283.75,226.73 L284.75,227.36 L285.75,228.02 L286.75,228.73 L287.75,229.48 L288.75,230.27 L289.75,231.09 L290.75,231.95 L291.75,232.83 L292.75,233.75 L293.75,234.69 L294.75,235.66 L295.75,236.65 L296.75,237.66 L297.75,238.69 L298.75,239.74 L299.75,240.80 L300.75,241.88 L301.75,242.97 L302.75,244.06 L303.75,245.17 L304.75,246.28 L305.25,246.84M305.25,246.84 L306.25,247.96 L307.25,249.08 L308.25,250.21 L309.25,251.34 L310.25,252.48 L311.25,253.61 L312.25,254.75 L313.25,255.88 L314.25,257.02 L315.25,258.16 L316.25,259.30 L317.25,260.43 L318.25,261.57 L319.25,262.71 L320.25,263.84 L321.25,264.98 L322.25,266.12 L323.25,267.25 L324.25,268.39 L325.25,269.53 L326.25,270.66 L327.25,271.80 L328.25,272.94 L329.25,274.07 L330.25,275.21 L331.25,276.34 L332.25,277.47 L333.25,278.60 L334.25,279.73 L335.25,280.85 L336.25,281.96 L337.25,283.07 L338.25,284.17 L339.25,285.26 L340.25,286.34 L341.25,287.41 L342.25,288.46 L343.25,289.50 L344.25,290.52 L345.25,291.52 L346.25,292.50 L347.25,293.45 L348.25,294.38 L349.25,295.28 L350.25,296.15 L351.25,296.99 L352.25,297.79 L353.25,298.55 L354.25,299.28 L355.25,299.97 L356.25,300.61 L357.25,301.21 L358.25,301.76 L359.25,302.26 L360.25,302.71 L361.25,303.11 L362.25,303.46 L363.25,303.76 L364.25,304.00 L365.25,304.18 L366.25,304.31 L367.25,304.38 L368.25,304.40 L369.25,304.36 L370.25,304.26 L371.25,304.11 L372.25,303.90 L373.25,303.63 L374.25,303.31 L375.25,302.94 L376.25,302.51 L377.25,302.04 L378.25,301.52 L379.25,300.94 L380.25,300.33 L381.25,299.66 L382.25,298.96 L383.25,298.22 L384.25,297.43 L385.25,296.61 L386.25,295.76 L387.25,294.88 L388.25,293.97 L389.25,293.03 L390.25,292.06 L391.25,291.07 L392.25,290.06 L393.25,289.04 L394.25,287.99 L395.25,286.93 L396.25,285.86 L397.25,284.77 L398.25,283.68 L399.25,282.57 L400.25,281.46 L401.25,280.34 L402.25,279.22 L403.25,278.09 L404.25,276.96 L405.25,275.83 L406.25,274.70 L407.00,273.85M407.00,273.85 L408.00,272.71 L409.00,271.57 L410.00,270.44 L411.00,269.30 L412.00,268.16 L413.00,267.03 L414.00,265.89 L415.00,264.75 L416.00,263.62 L417.00,262.48 L418.00,261.34 L419.00,260.20 L420.00,259.07 L421.00,257.93 L422.00,256.79 L423.00,255.66 L424.00,254.52 L425.00,253.38 L426.00,252.25 L427.00,251.12 L428.00,249.99 L429.00,248.86 L430.00,247.73 L431.00,246.61 L432.00,245.50 L433.00,244.39 L434.00,243.29 L435.00,242.20 L436.00,241.12 L437.00,240.06 L438.00,239.01 L439.00,237.97 L440.00,236.95 L441.00,235.96 L442.00,234.98 L443.00,234.03 L444.00,233.11 L445.00,232.21 L446.00,231.34 L447.00,230.51 L448.00,229.71 L449.00,228.95 L450.00,228.23 L451.00,227.55 L452.00,226.91 L453.00,226.32 L454.00,225.78 L455.00,225.28 L456.00,224.83 L457.00,224.44 L458.00,224.10 L459.00,223.81 L460.00,223.58 L461.00,223.40 L462.00,223.28 L463.00,223.21 L464.00,223.20 L465.00,223.25 L466.00,223.36 L467.00,223.52 L468.00,223.73 L469.00,224.01 L470.00,224.33 L471.00,224.71 L472.00,225.14 L473.00,225.62 L474.00,226.15 L475.00,226.73 L476.00,227.36 L477.00,228.02 L478.00,228.73 L479.00,229.48 L480.00,230.27 L481.00,231.09 L482.00,231.95 L483.00,232.83 L484.00,233.75 L485.00,234.69 L486.00,235.66 L487.00,236.65 L488.00,237.66 L489.00,238.69 L490.00,239.74 L491.00,240.80 L492.00,241.88 L493.00,242.97 L494.00,244.06 L495.00,245.17 L496.00,246.28 L496.50,246.84M496.50,246.84 L497.50,247.96 L498.50,249.08 L499.50,250.21 L500.50,251.34 L501.50,252.48 L502.50,253.61 L503.50,254.75 L504.50,255.88 L505.50,257.02 L506.50,258.16 L507.50,259.30 L508.50,260.43 L509.50,261.57 L510.50,262.71 L511.50,263.84 L512.50,264.98 L513.50,266.12 L514.50,267.25 L515.50,268.39 L516.50,269.53 L517.50,270.66 L518.50,271.80 L519.50,272.94 L520.50,274.07 L521.50,275.21 L522.50,276.34 L523.50,277.47 L524.50,278.60 L525.50,279.73 L526.50,280.85 L527.50,281.96 L528.50,283.07 L529.50,284.17 L530.50,285.26 L531.50,286.34 L532.50,287.41 L533.50,288.46 L534.50,289.50 L535.50,290.52 L536.50,291.52 L537.50,292.50 L538.50,293.45 L539.50,294.38 L540.50,295.28 L541.50,296.15 L542.50,296.99 L543.50,297.79 L544.50,298.55 L545.50,299.28 L546.50,299.97 L547.50,300.61 L548.50,301.21 L549.50,301.76 L550.50,302.26 L551.50,302.71 L552.50,303.11 L553.50,303.46 L554.50,303.76 L555.50,304.00 L556.50,304.18 L557.50,304.31 L558.50,304.38 L559.50,304.40 L560.50,304.36 L561.50,304.26 L562.50,304.11 L563.50,303.90 L564.50,303.63 L565.50,303.31 L566.50,302.94 L567.50,302.51 L568.50,302.04 L569.50,301.52 L570.50,300.94 L571.50,300.33 L572.50,299.66 L573.50,298.96 L574.50,298.22 L575.50,297.43 L576.50,296.61 L577.50,295.76 L578.50,294.88 L579.50,293.97 L580.50,293.03 L581.50,292.06 L582.50,291.07 L583.50,290.06 L584.50,289.04 L585.50,287.99 L586.50,286.93 L587.50,285.86 L588.50,284.77 L589.50,283.68 L590.50,282.57 L591.50,281.46 L592.50,280.34 L593.50,279.22 L594.50,278.09 L595.50,276.96 L596.50,275.83 L597.50,274.70 L598.25,273.85M598.25,273.85 L599.25,272.71 L600.25,271.57 L601.25,270.44 L602.25,269.30 L603.25,268.16 L604.25,267.03 L605.25,265.89 L606.25,264.75 L607.25,263.62 L608.25,262.48 L609.25,261.34 L610.25,260.20 L611.25,259.07 L612.25,257.93 L613.25,256.79 L614.25,255.66 L615.25,254.52 L616.25,253.38 L617.25,252.25 L618.25,251.12 L619.25,249.99 L620.25,248.86 L621.25,247.73 L622.25,246.61 L623.25,245.50 L624.25,244.39 L625.25,243.29 L626.25,242.20 L627.25,241.12 L628.25,240.06 L629.25,239.01 L630.25,237.97 L631.25,236.95 L632.25,235.96 L633.25,234.98 L634.25,234.03 L635.25,233.11 L636.25,232.21 L637.25,231.34 L638.25,230.51 L639.25,229.71 L640.25,228.95 L641.25,228.23 L642.25,227.55 L643.25,226.91 L644.25,226.32 L645.25,225.78 L646.25,225.28 L647.25,224.83 L648.25,224.44 L649.25,224.10 L650.25,223.81 L651.25,223.58 L652.25,223.40 L653.25,223.28 L654.25,223.21 L655.25,223.20 L656.25,223.25 L657.25,223.36 L658.25,223.52 L659.25,223.73 L660.25,224.01 L661.25,224.33 L662.25,224.71 L663.25,225.14 L664.25,225.62 L665.25,226.15 L666.25,226.73 L667.25,227.36 L668.25,228.02 L669.25,228.73 L670.25,229.48 L671.25,230.27 L672.25,231.09 L673.25,231.95 L674.25,232.83 L675.25,233.75 L676.25,234.69 L677.25,235.66 L678.25,236.65 L679.25,237.66 L680.25,238.69 L681.25,239.74 L682.25,240.80 L683.25,241.88 L684.25,242.97 L685.25,244.06 L686.25,245.17 L687.25,246.28 L687.75,246.84M687.75,246.84 L688.75,247.96 L689.75,249.08 L690.75,250.21 L691.75,251.34 L692.75,252.48 L693.75,253.61 L694.75,254.75 L695.75,255.88 L696.75,257.02 L697.75,258.16 L698.75,259.30 L699.75,260.43 L700.75,261.57 L701.75,262.71 L702.75,263.84 L703.75,264.98 L704.75,266.12 L705.75,267.25 L706.75,268.39 L707.75,269.53 L708.75,270.66 L709.75,271.80 L710.75,272.94 L711.75,274.07 L712.75,275.21 L713.75,276.34 L714.75,277.47 L715.75,278.60 L716.75,279.73 L717.75,280.85 L718.75,281.96 L719.75,283.07 L720.75,284.17 L721.75,285.26 L722.75,286.34 L723.75,287.41 L724.75,288.46 L725.75,289.50 L726.75,290.52 L727.75,291.52 L728.75,292.50 L729.75,293.45 L730.75,294.38 L731.75,295.28 L732.75,296.15 L733.75,296.99 L734.75,297.79 L735.75,298.55 L736.75,299.28 L737.75,299.97 L738.75,300.61 L739.75,301.21 L740.75,301.76 L741.75,302.26 L742.75,302.71 L743.75,303.11 L744.75,303.46 L745.75,303.76 L746.75,304.00 L747.75,304.18 L748.75,304.31 L749.75,304.38 L750.75,304.40 L751.75,304.36 L752.75,304.26 L753.75,304.11 L754.75,303.90 L755.75,303.63 L756.75,303.31 L757.75,302.94 L758.75,302.51 L759.75,302.04 L760.75,301.52 L761.75,300.94 L762.75,300.33 L763.75,299.66 L764.75,298.96 L765.75,298.22 L766.75,297.43 L767.75,296.61 L768.75,295.76 L769.75,294.88 L770.75,293.97 L771.75,293.03 L772.75,292.06 L773.75,291.07 L774.75,290.06 L775.75,289.04 L776.75,287.99 L777.75,286.93 L778.75,285.86 L779.75,284.77 L780.75,283.68 L781.75,282.57 L782.75,281.46 L783.75,280.34 L784.75,279.22 L785.75,278.09 L786.75,276.96 L787.75,275.83 L788.75,274.70 L789.50,273.85M789.50,273.85 L790.50,272.71 L791.50,271.57 L792.50,270.44 L793.50,269.30 L794.50,268.16 L795.50,267.03 L796.50,265.89 L797.00,265.32" stroke="#00a8a8" stroke-width="5.6" stroke-opacity="0.4"/>
<path d="M17.00,282.29 L18.00,281.18 L19.00,280.06 L20.00,278.94 L21.00,277.81 L22.00,276.68 L23.00,275.55 L24.00,274.41 L24.50,273.85M24.50,273.85 L25.50,272.71 L26.50,271.57 L27.50,270.44 L28.50,269.30 L29.50,268.16 L30.50,267.03 L31.50,265.89 L32.50,264.75 L33.50,263.62 L34.50,262.48 L35.50,261.34 L36.50,260.20 L37.50,259.07 L38.50,257.93 L39.50,256.79 L40.50,255.66 L41.50,254.52 L42.50,253.38 L43.50,252.25 L44.50,251.12 L45.50,249.99 L46.50,248.86 L47.50,247.73 L48.50,246.61 L49.50,245.50 L50.50,244.39 L51.50,243.29 L52.50,242.20 L53.50,241.12 L54.50,240.06 L55.50,239.01 L56.50,237.97 L57.50,236.95 L58.50,235.96 L59.50,234.98 L60.50,234.03 L61.50,233.11 L62.50,232.21 L63.50,231.34 L64.50,230.51 L65.50,229.71 L66.50,228.95 L67.50,228.23 L68.50,227.55 L69.50,226.91 L70.50,226.32 L71.50,225.78 L72.50,225.28 L73.50,224.83 L74.50,224.44 L75.50,224.10 L76.50,223.81 L77.50,223.58 L78.50,223.40 L79.50,223.28 L80.50,223.21 L81.50,223.20 L82.50,223.25 L83.50,223.36 L84.50,223.52 L85.50,223.73 L86.50,224.01 L87.50,224.33 L88.50,224.71 L89.50,225.14 L90.50,225.62 L91.50,226.15 L92.50,226.73 L93.50,227.36 L94.50,228.02 L95.50,228.73 L96.50,229.48 L97.50,230.27 L98.50,231.09 L99.50,231.95 L100.50,232.83 L101.50,233.75 L102.50,234.69 L103.50,235.66 L104.50,236.65 L105.50,237.66 L106.50,238.69 L107.50,239.74 L108.50,240.80 L109.50,241.88 L110.50,242.97 L111.50,244.06 L112.50,245.17 L113.50,246.28 L114.00,246.84M114.00,246.84 L115.00,247.96 L116.00,249.08 L117.00,250.21 L118.00,251.34 L119.00,252.48 L120.00,253.61 L121.00,254.75 L122.00,255.88 L123.00,257.02 L124.00,258.16 L125.00,259.30 L126.00,260.43 L127.00,261.57 L128.00,262.71 L129.00,263.84 L130.00,264.98 L131.00,266.12 L132.00,267.25 L133.00,268.39 L134.00,269.53 L135.00,270.66 L136.00,271.80 L137.00,272.94 L138.00,274.07 L139.00,275.21 L140.00,276.34 L141.00,277.47 L142.00,278.60 L143.00,279.73 L144.00,280.85 L145.00,281.96 L146.00,283.07 L147.00,284.17 L148.00,285.26 L149.00,286.34 L150.00,287.41 L151.00,288.46 L152.00,289.50 L153.00,290.52 L154.00,291.52 L155.00,292.50 L156.00,293.45 L157.00,294.38 L158.00,295.28 L159.00,296.15 L160.00,296.99 L161.00,297.79 L162.00,298.55 L163.00,299.28 L164.00,299.97 L165.00,300.61 L166.00,301.21 L167.00,301.76 L168.00,302.26 L169.00,302.71 L170.00,303.11 L171.00,303.46 L172.00,303.76 L173.00,304.00 L174.00,304.18 L175.00,304.31 L176.00,304.38 L177.00,304.40 L178.00,304.36 L179.00,304.26 L180.00,304.11 L181.00,303.90 L182.00,303.63 L183.00,303.31 L184.00,302.94 L185.00,302.51 L186.00,302.04 L187.00,301.52 L188.00,300.94 L189.00,300.33 L190.00,299.66 L191.00,298.96 L192.00,298.22 L193.00,297.43 L194.00,296.61 L195.00,295.76 L196.00,294.88 L197.00,293.97 L198.00,293.03 L199.00,292.06 L200.00,291.07 L201.00,290.06 L202.00,289.04 L203.00,287.99 L204.00,286.93 L205.00,285.86 L206.00,284.77 L207.00,283.68 L208.00,282.57 L209.00,281.46 L210.00,280.34 L211.00,279.22 L212.00,278.09 L213.00,276.96 L214.00,275.83 L215.00,274.70 L215.75,273.85M215.75,273.85 L216.75,272.71 L217.75,271.57 L218.75,270.44 L219.75,269.30 L220.75,268.16 L221.75,267.03 L222.75,265.89 L223.75,264.75 L224.75,263.62 L225.75,262.48 L226.75,261.34 L227.75,260.20 L228.75,259.07 L229.75,257.93 L230.75,256.79 L231.75,255.66 L232.75,254.52 L233.75,253.38 L234.75,252.25 L235.75,251.12 L236.75,249.99 L237.75,248.86 L238.75,247.73 L239.75,246.61 L240.75,245.50 L241.75,244.39 L242.75,243.29 L243.75,242.20 L244.75,241.12 L245.75,240.06 L246.75,239.01 L247.75,237.97 L248.75,236.95 L249.75,235.96 L250.75,234.98 L251.75,234.03 L252.75,233.11 L253.75,232.21 L254.75,231.34 L255.75,230.51 L256.75,229.71 L257.75,228.95 L258.75,228.23 L259.75,227.55 L260.75,226.91 L261.75,226.32 L262.75,225.78 L263.75,225.28 L264.75,224.83 L265.75,224.44 L266.75,224.10 L267.75,223.81 L268.75,223.58 L269.75,223.40 L270.75,223.28 L271.75,223.21 L272.75,223.20 L273.75,223.25 L274.75,223.36 L275.75,223.52 L276.75,223.73 L277.75,224.01 L278.75,224.33 L279.75,224.71 L280.75,225.14 L281.75,225.62 L282.75,226.15 L283.75,226.73 L284.75,227.36 L285.75,228.02 L286.75,228.73 L287.75,229.48 L288.75,230.27 L289.75,231.09 L290.75,231.95 L291.75,232.83 L292.75,233.75 L293.75,234.69 L294.75,235.66 L295.75,236.65 L296.75,237.66 L297.75,238.69 L298.75,239.74 L299.75,240.80 L300.75,241.88 L301.75,242.97 L302.75,244.06 L303.75,245.17 L304.75,246.28 L305.25,246.84M305.25,246.84 L306.25,247.96 L307.25,249.08 L308.25,250.21 L309.25,251.34 L310.25,252.48 L311.25,253.61 L312.25,254.75 L313.25,255.88 L314.25,257.02 L315.25,258.16 L316.25,259.30 L317.25,260.43 L318.25,261.57 L319.25,262.71 L320.25,263.84 L321.25,264.98 L322.25,266.12 L323.25,267.25 L324.25,268.39 L325.25,269.53 L326.25,270.66 L327.25,271.80 L328.25,272.94 L329.25,274.07 L330.25,275.21 L331.25,276.34 L332.25,277.47 L333.25,278.60 L334.25,279.73 L335.25,280.85 L336.25,281.96 L337.25,283.07 L338.25,284.17 L339.25,285.26 L340.25,286.34 L341.25,287.41 L342.25,288.46 L343.25,289.50 L344.25,290.52 L345.25,291.52 L346.25,292.50 L347.25,293.45 L348.25,294.38 L349.25,295.28 L350.25,296.15 L351.25,296.99 L352.25,297.79 L353.25,298.55 L354.25,299.28 L355.25,299.97 L356.25,300.61 L357.25,301.21 L358.25,301.76 L359.25,302.26 L360.25,302.71 L361.25,303.11 L362.25,303.46 L363.25,303.76 L364.25,304.00 L365.25,304.18 L366.25,304.31 L367.25,304.38 L368.25,304.40 L369.25,304.36 L370.25,304.26 L371.25,304.11 L372.25,303.90 L373.25,303.63 L374.25,303.31 L375.25,302.94 L376.25,302.51 L377.25,302.04 L378.25,301.52 L379.25,300.94 L380.25,300.33 L381.25,299.66 L382.25,298.96 L383.25,298.22 L384.25,297.43 L385.25,296.61 L386.25,295.76 L387.25,294.88 L388.25,293.97 L389.25,293.03 L390.25,292.06 L391.25,291.07 L392.25,290.06 L393.25,289.04 L394.25,287.99 L395.25,286.93 L396.25,285.86 L397.25,284.77 L398.25,283.68 L399.25,282.57 L400.25,281.46 L401.25,280.34 L402.25,279.22 L403.25,278.09 L404.25,276.96 L405.25,275.83 L406.25,274.70 L407.00,273.85M407.00,273.85 L408.00,272.71 L409.00,271.57 L410.00,270.44 L411.00,269.30 L412.00,268.16 L413.00,267.03 L414.00,265.89 L415.00,264.75 L416.00,263.62 L417.00,262.48 L418.00,261.34 L419.00,260.20 L420.00,259.07 L421.00,257.93 L422.00,256.79 L423.00,255.66 L424.00,254.52 L425.00,253.38 L426.00,252.25 L427.00,251.12 L428.00,249.99 L429.00,248.86 L430.00,247.73 L431.00,246.61 L432.00,245.50 L433.00,244.39 L434.00,243.29 L435.00,242.20 L436.00,241.12 L437.00,240.06 L438.00,239.01 L439.00,237.97 L440.00,236.95 L441.00,235.96 L442.00,234.98 L443.00,234.03 L444.00,233.11 L445.00,232.21 L446.00,231.34 L447.00,230.51 L448.00,229.71 L449.00,228.95 L450.00,228.23 L451.00,227.55 L452.00,226.91 L453.00,226.32 L454.00,225.78 L455.00,225.28 L456.00,224.83 L457.00,224.44 L458.00,224.10 L459.00,223.81 L460.00,223.58 L461.00,223.40 L462.00,223.28 L463.00,223.21 L464.00,223.20 L465.00,223.25 L466.00,223.36 L467.00,223.52 L468.00,223.73 L469.00,224.01 L470.00,224.33 L471.00,224.71 L472.00,225.14 L473.00,225.62 L474.00,226.15 L475.00,226.73 L476.00,227.36 L477.00,228.02 L478.00,228.73 L479.00,229.48 L480.00,230.27 L481.00,231.09 L482.00,231.95 L483.00,232.83 L484.00,233.75 L485.00,234.69 L486.00,235.66 L487.00,236.65 L488.00,237.66 L489.00,238.69 L490.00,239.74 L491.00,240.80 L492.00,241.88 L493.00,242.97 L494.00,244.06 L495.00,245.17 L496.00,246.28 L496.50,246.84M496.50,246.84 L497.50,247.96 L498.50,249.08 L499.50,250.21 L500.50,251.34 L501.50,252.48 L502.50,253.61 L503.50,254.75 L504.50,255.88 L505.50,257.02 L506.50,258.16 L507.50,259.30 L508.50,260.43 L509.50,261.57 L510.50,262.71 L511.50,263.84 L512.50,264.98 L513.50,266.12 L514.50,267.25 L515.50,268.39 L516.50,269.53 L517.50,270.66 L518.50,271.80 L519.50,272.94 L520.50,274.07 L521.50,275.21 L522.50,276.34 L523.50,277.47 L524.50,278.60 L525.50,279.73 L526.50,280.85 L527.50,281.96 L528.50,283.07 L529.50,284.17 L530.50,285.26 L531.50,286.34 L532.50,287.41 L533.50,288.46 L534.50,289.50 L535.50,290.52 L536.50,291.52 L537.50,292.50 L538.50,293.45 L539.50,294.38 L540.50,295.28 L541.50,296.15 L542.50,296.99 L543.50,297.79 L544.50,298.55 L545.50,299.28 L546.50,299.97 L547.50,300.61 L548.50,301.21 L549.50,301.76 L550.50,302.26 L551.50,302.71 L552.50,303.11 L553.50,303.46 L554.50,303.76 L555.50,304.00 L556.50,304.18 L557.50,304.31 L558.50,304.38 L559.50,304.40 L560.50,304.36 L561.50,304.26 L562.50,304.11 L563.50,303.90 L564.50,303.63 L565.50,303.31 L566.50,302.94 L567.50,302.51 L568.50,302.04 L569.50,301.52 L570.50,300.94 L571.50,300.33 L572.50,299.66 L573.50,298.96 L574.50,298.22 L575.50,297.43 L576.50,296.61 L577.50,295.76 L578.50,294.88 L579.50,293.97 L580.50,293.03 L581.50,292.06 L582.50,291.07 L583.50,290.06 L584.50,289.04 L585.50,287.99 L586.50,286.93 L587.50,285.86 L588.50,284.77 L589.50,283.68 L590.50,282.57 L591.50,281.46 L592.50,280.34 L593.50,279.22 L594.50,278.09 L595.50,276.96 L596.50,275.83 L597.50,274.70 L598.25,273.85M598.25,273.85 L599.25,272.71 L600.25,271.57 L601.25,270.44 L602.25,269.30 L603.25,268.16 L604.25,267.03 L605.25,265.89 L606.25,264.75 L607.25,263.62 L608.25,262.48 L609.25,261.34 L610.25,260.20 L611.25,259.07 L612.25,257.93 L613.25,256.79 L614.25,255.66 L615.25,254.52 L616.25,253.38 L617.25,252.25 L618.25,251.12 L619.25,249.99 L620.25,248.86 L621.25,247.73 L622.25,246.61 L623.25,245.50 L624.25,244.39 L625.25,243.29 L626.25,242.20 L627.25,241.12 L628.25,240.06 L629.25,239.01 L630.25,237.97 L631.25,236.95 L632.25,235.96 L633.25,234.98 L634.25,234.03 L635.25,233.11 L636.25,232.21 L637.25,231.34 L638.25,230.51 L639.25,229.71 L640.25,228.95 L641.25,228.23 L642.25,227.55 L643.25,226.91 L644.25,226.32 L645.25,225.78 L646.25,225.28 L647.25,224.83 L648.25,224.44 L649.25,224.10 L650.25,223.81 L651.25,223.58 L652.25,223.40 L653.25,223.28 L654.25,223.21 L655.25,223.20 L656.25,223.25 L657.25,223.36 L658.25,223.52 L659.25,223.73 L660.25,224.01 L661.25,224.33 L662.25,224.71 L663.25,225.14 L664.25,225.62 L665.25,226.15 L666.25,226.73 L667.25,227.36 L668.25,228.02 L669.25,228.73 L670.25,229.48 L671.25,230.27 L672.25,231.09 L673.25,231.95 L674.25,232.83 L675.25,233.75 L676.25,234.69 L677.25,235.66 L678.25,236.65 L679.25,237.66 L680.25,238.69 L681.25,239.74 L682.25,240.80 L683.25,241.88 L684.25,242.97 L685.25,244.06 L686.25,245.17 L687.25,246.28 L687.75,246.84M687.75,246.84 L688.75,247.96 L689.75,249.08 L690.75,250.21 L691.75,251.34 L692.75,252.48 L693.75,253.61 L694.75,254.75 L695.75,255.88 L696.75,257.02 L697.75,258.16 L698.75,259.30 L699.75,260.43 L700.75,261.57 L701.75,262.71 L702.75,263.84 L703.75,264.98 L704.75,266.12 L705.75,267.25 L706.75,268.39 L707.75,269.53 L708.75,270.66 L709.75,271.80 L710.75,272.94 L711.75,274.07 L712.75,275.21 L713.75,276.34 L714.75,277.47 L715.75,278.60 L716.75,279.73 L717.75,280.85 L718.75,281.96 L719.75,283.07 L720.75,284.17 L721.75,285.26 L722.75,286.34 L723.75,287.41 L724.75,288.46 L725.75,289.50 L726.75,290.52 L727.75,291.52 L728.75,292.50 L729.75,293.45 L730.75,294.38 L731.75,295.28 L732.75,296.15 L733.75,296.99 L734.75,297.79 L735.75,298.55 L736.75,299.28 L737.75,299.97 L738.75,300.61 L739.75,301.21 L740.75,301.76 L741.75,302.26 L742.75,302.71 L743.75,303.11 L744.75,303.46 L745.75,303.76 L746.75,304.00 L747.75,304.18 L748.75,304.31 L749.75,304.38 L750.75,304.40 L751.75,304.36 L752.75,304.26 L753.75,304.11 L754.75,303.90 L755.75,303.63 L756.75,303.31 L757.75,302.94 L758.75,302.51 L759.75,302.04 L760.75,301.52 L761.75,300.94 L762.75,300.33 L763.75,299.66 L764.75,298.96 L765.75,298.22 L766.75,297.43 L767.75,296.61 L768.75,295.76 L769.75,294.88 L770.75,293.97 L771.75,293.03 L772.75,292.06 L773.75,291.07 L774.75,290.06 L775.75,289.04 L776.75,287.99 L777.75,286.93 L778.75,285.86 L779.75,284.77 L780.75,283.68 L781.75,282.57 L782.75,281.46 L783.75,280.34 L784.75,279.22 L785.75,278.09 L786.75,276.96 L787.75,275.83 L788.75,274.70 L789.50,273.85M789.50,273.85 L790.50,272.71 L791.50,271.57 L792.50,270.44 L793.50,269.30 L794.50,268.16 L795.50,267.03 L796.50,265.89 L797.00,265.32" stroke="#10e0e0" stroke-width="2.9"/>
<g>
<path d="M-16.25,340.75C-15.00,342.50 -11.25,347.88 -8.75,351.25C-6.25,354.62 -3.75,358.12 -1.25,361.00C1.25,363.88 3.75,366.50 6.25,368.50C8.75,370.50 11.25,371.88 13.75,373.00C16.25,374.12 19.44,374.67 21.25,375.25C23.06,375.83 22.86,375.82 24.60,376.50C26.34,377.18 29.58,378.72 31.70,379.30C33.82,379.88 34.95,380.12 37.30,380.00C39.65,379.88 43.20,379.42 45.80,378.60C48.40,377.78 50.53,376.52 52.90,375.10C55.27,373.68 57.63,372.00 60.00,370.10C62.37,368.20 64.73,366.30 67.10,363.70C69.47,361.10 71.85,357.62 74.20,354.50C76.55,351.38 78.85,348.07 81.20,345.00C83.55,341.93 85.93,338.88 88.30,336.10C90.67,333.32 93.03,330.53 95.40,328.30C97.77,326.07 100.48,324.25 102.50,322.70C104.52,321.15 105.67,320.12 107.50,319.00C109.33,317.88 111.75,317.25 113.50,316.00C115.25,314.75 116.25,313.12 118.00,311.50C119.75,309.88 122.00,307.45 124.00,306.25C126.00,305.05 128.00,304.62 130.00,304.30C132.00,303.98 134.00,303.98 136.00,304.30C138.00,304.62 140.00,305.43 142.00,306.25C144.00,307.07 146.00,307.88 148.00,309.25C150.00,310.62 152.00,312.50 154.00,314.50C156.00,316.50 157.75,318.50 160.00,321.25C162.25,324.00 165.00,327.75 167.50,331.00C170.00,334.25 172.50,337.38 175.00,340.75C177.50,344.12 180.00,347.88 182.50,351.25C185.00,354.62 187.50,358.12 190.00,361.00C192.50,363.88 195.00,366.50 197.50,368.50C200.00,370.50 202.50,371.88 205.00,373.00C207.50,374.12 210.69,374.67 212.50,375.25C214.31,375.83 214.11,375.82 215.85,376.50C217.59,377.18 220.83,378.72 222.95,379.30C225.07,379.88 226.20,380.12 228.55,380.00C230.90,379.88 234.45,379.42 237.05,378.60C239.65,377.78 241.78,376.52 244.15,375.10C246.52,373.68 248.88,372.00 251.25,370.10C253.62,368.20 255.98,366.30 258.35,363.70C260.72,361.10 263.10,357.62 265.45,354.50C267.80,351.38 270.10,348.07 272.45,345.00C274.80,341.93 277.18,338.88 279.55,336.10C281.92,333.32 284.28,330.53 286.65,328.30C289.02,326.07 291.73,324.25 293.75,322.70C295.77,321.15 296.92,320.12 298.75,319.00C300.58,317.88 303.00,317.25 304.75,316.00C306.50,314.75 307.50,313.12 309.25,311.50C311.00,309.88 313.25,307.45 315.25,306.25C317.25,305.05 319.25,304.62 321.25,304.30C323.25,303.98 325.25,303.98 327.25,304.30C329.25,304.62 331.25,305.43 333.25,306.25C335.25,307.07 337.25,307.88 339.25,309.25C341.25,310.62 343.25,312.50 345.25,314.50C347.25,316.50 349.00,318.50 351.25,321.25C353.50,324.00 356.25,327.75 358.75,331.00C361.25,334.25 363.75,337.38 366.25,340.75C368.75,344.12 371.25,347.88 373.75,351.25C376.25,354.62 378.75,358.12 381.25,361.00C383.75,363.88 386.25,366.50 388.75,368.50C391.25,370.50 393.75,371.88 396.25,373.00C398.75,374.12 401.94,374.67 403.75,375.25C405.56,375.83 405.36,375.82 407.10,376.50C408.84,377.18 412.08,378.72 414.20,379.30C416.32,379.88 417.45,380.12 419.80,380.00C422.15,379.88 425.70,379.42 428.30,378.60C430.90,377.78 433.03,376.52 435.40,375.10C437.77,373.68 440.13,372.00 442.50,370.10C444.87,368.20 447.23,366.30 449.60,363.70C451.97,361.10 454.35,357.62 456.70,354.50C459.05,351.38 461.35,348.07 463.70,345.00C466.05,341.93 468.43,338.88 470.80,336.10C473.17,333.32 475.53,330.53 477.90,328.30C480.27,326.07 482.98,324.25 485.00,322.70C487.02,321.15 488.17,320.12 490.00,319.00C491.83,317.88 494.25,317.25 496.00,316.00C497.75,314.75 498.75,313.12 500.50,311.50C502.25,309.88 504.50,307.45 506.50,306.25C508.50,305.05 510.50,304.62 512.50,304.30C514.50,303.98 516.50,303.98 518.50,304.30C520.50,304.62 522.50,305.43 524.50,306.25C526.50,307.07 528.50,307.88 530.50,309.25C532.50,310.62 534.50,312.50 536.50,314.50C538.50,316.50 540.25,318.50 542.50,321.25C544.75,324.00 547.50,327.75 550.00,331.00C552.50,334.25 555.00,337.38 557.50,340.75C560.00,344.12 562.50,347.88 565.00,351.25C567.50,354.62 570.00,358.12 572.50,361.00C575.00,363.88 577.50,366.50 580.00,368.50C582.50,370.50 585.00,371.88 587.50,373.00C590.00,374.12 593.19,374.67 595.00,375.25C596.81,375.83 596.61,375.82 598.35,376.50C600.09,377.18 603.33,378.72 605.45,379.30C607.57,379.88 608.70,380.12 611.05,380.00C613.40,379.88 616.95,379.42 619.55,378.60C622.15,377.78 624.28,376.52 626.65,375.10C629.02,373.68 631.38,372.00 633.75,370.10C636.12,368.20 638.48,366.30 640.85,363.70C643.22,361.10 645.60,357.62 647.95,354.50C650.30,351.38 652.60,348.07 654.95,345.00C657.30,341.93 659.68,338.88 662.05,336.10C664.42,333.32 666.78,330.53 669.15,328.30C671.52,326.07 674.23,324.25 676.25,322.70C678.27,321.15 679.42,320.12 681.25,319.00C683.08,317.88 685.50,317.25 687.25,316.00C689.00,314.75 690.00,313.12 691.75,311.50C693.50,309.88 695.75,307.45 697.75,306.25C699.75,305.05 701.75,304.62 703.75,304.30C705.75,303.98 707.75,303.98 709.75,304.30C711.75,304.62 713.75,305.43 715.75,306.25C717.75,307.07 719.75,307.88 721.75,309.25C723.75,310.62 725.75,312.50 727.75,314.50C729.75,316.50 731.50,318.50 733.75,321.25C736.00,324.00 738.75,327.75 741.25,331.00C743.75,334.25 746.25,337.38 748.75,340.75C751.25,344.12 753.75,347.88 756.25,351.25C758.75,354.62 761.25,358.12 763.75,361.00C766.25,363.88 768.75,366.50 771.25,368.50C773.75,370.50 776.25,371.88 778.75,373.00C781.25,374.12 784.44,374.67 786.25,375.25C788.06,375.83 787.86,375.82 789.60,376.50C791.34,377.18 794.58,378.72 796.70,379.30C798.82,379.88 799.95,380.12 802.30,380.00C804.65,379.88 808.20,379.42 810.80,378.60C813.40,377.78 815.53,376.52 817.90,375.10C820.27,373.68 823.82,370.93 825.00,370.10" stroke="#b000b0" stroke-width="6" stroke-opacity="0.4"/>
<path d="M-16.25,340.75C-15.00,342.50 -11.25,347.88 -8.75,351.25C-6.25,354.62 -3.75,358.12 -1.25,361.00C1.25,363.88 3.75,366.50 6.25,368.50C8.75,370.50 11.25,371.88 13.75,373.00C16.25,374.12 19.44,374.67 21.25,375.25C23.06,375.83 22.86,375.82 24.60,376.50C26.34,377.18 29.58,378.72 31.70,379.30C33.82,379.88 34.95,380.12 37.30,380.00C39.65,379.88 43.20,379.42 45.80,378.60C48.40,377.78 50.53,376.52 52.90,375.10C55.27,373.68 57.63,372.00 60.00,370.10C62.37,368.20 64.73,366.30 67.10,363.70C69.47,361.10 71.85,357.62 74.20,354.50C76.55,351.38 78.85,348.07 81.20,345.00C83.55,341.93 85.93,338.88 88.30,336.10C90.67,333.32 93.03,330.53 95.40,328.30C97.77,326.07 100.48,324.25 102.50,322.70C104.52,321.15 105.67,320.12 107.50,319.00C109.33,317.88 111.75,317.25 113.50,316.00C115.25,314.75 116.25,313.12 118.00,311.50C119.75,309.88 122.00,307.45 124.00,306.25C126.00,305.05 128.00,304.62 130.00,304.30C132.00,303.98 134.00,303.98 136.00,304.30C138.00,304.62 140.00,305.43 142.00,306.25C144.00,307.07 146.00,307.88 148.00,309.25C150.00,310.62 152.00,312.50 154.00,314.50C156.00,316.50 157.75,318.50 160.00,321.25C162.25,324.00 165.00,327.75 167.50,331.00C170.00,334.25 172.50,337.38 175.00,340.75C177.50,344.12 180.00,347.88 182.50,351.25C185.00,354.62 187.50,358.12 190.00,361.00C192.50,363.88 195.00,366.50 197.50,368.50C200.00,370.50 202.50,371.88 205.00,373.00C207.50,374.12 210.69,374.67 212.50,375.25C214.31,375.83 214.11,375.82 215.85,376.50C217.59,377.18 220.83,378.72 222.95,379.30C225.07,379.88 226.20,380.12 228.55,380.00C230.90,379.88 234.45,379.42 237.05,378.60C239.65,377.78 241.78,376.52 244.15,375.10C246.52,373.68 248.88,372.00 251.25,370.10C253.62,368.20 255.98,366.30 258.35,363.70C260.72,361.10 263.10,357.62 265.45,354.50C267.80,351.38 270.10,348.07 272.45,345.00C274.80,341.93 277.18,338.88 279.55,336.10C281.92,333.32 284.28,330.53 286.65,328.30C289.02,326.07 291.73,324.25 293.75,322.70C295.77,321.15 296.92,320.12 298.75,319.00C300.58,317.88 303.00,317.25 304.75,316.00C306.50,314.75 307.50,313.12 309.25,311.50C311.00,309.88 313.25,307.45 315.25,306.25C317.25,305.05 319.25,304.62 321.25,304.30C323.25,303.98 325.25,303.98 327.25,304.30C329.25,304.62 331.25,305.43 333.25,306.25C335.25,307.07 337.25,307.88 339.25,309.25C341.25,310.62 343.25,312.50 345.25,314.50C347.25,316.50 349.00,318.50 351.25,321.25C353.50,324.00 356.25,327.75 358.75,331.00C361.25,334.25 363.75,337.38 366.25,340.75C368.75,344.12 371.25,347.88 373.75,351.25C376.25,354.62 378.75,358.12 381.25,361.00C383.75,363.88 386.25,366.50 388.75,368.50C391.25,370.50 393.75,371.88 396.25,373.00C398.75,374.12 401.94,374.67 403.75,375.25C405.56,375.83 405.36,375.82 407.10,376.50C408.84,377.18 412.08,378.72 414.20,379.30C416.32,379.88 417.45,380.12 419.80,380.00C422.15,379.88 425.70,379.42 428.30,378.60C430.90,377.78 433.03,376.52 435.40,375.10C437.77,373.68 440.13,372.00 442.50,370.10C444.87,368.20 447.23,366.30 449.60,363.70C451.97,361.10 454.35,357.62 456.70,354.50C459.05,351.38 461.35,348.07 463.70,345.00C466.05,341.93 468.43,338.88 470.80,336.10C473.17,333.32 475.53,330.53 477.90,328.30C480.27,326.07 482.98,324.25 485.00,322.70C487.02,321.15 488.17,320.12 490.00,319.00C491.83,317.88 494.25,317.25 496.00,316.00C497.75,314.75 498.75,313.12 500.50,311.50C502.25,309.88 504.50,307.45 506.50,306.25C508.50,305.05 510.50,304.62 512.50,304.30C514.50,303.98 516.50,303.98 518.50,304.30C520.50,304.62 522.50,305.43 524.50,306.25C526.50,307.07 528.50,307.88 530.50,309.25C532.50,310.62 534.50,312.50 536.50,314.50C538.50,316.50 540.25,318.50 542.50,321.25C544.75,324.00 547.50,327.75 550.00,331.00C552.50,334.25 555.00,337.38 557.50,340.75C560.00,344.12 562.50,347.88 565.00,351.25C567.50,354.62 570.00,358.12 572.50,361.00C575.00,363.88 577.50,366.50 580.00,368.50C582.50,370.50 585.00,371.88 587.50,373.00C590.00,374.12 593.19,374.67 595.00,375.25C596.81,375.83 596.61,375.82 598.35,376.50C600.09,377.18 603.33,378.72 605.45,379.30C607.57,379.88 608.70,380.12 611.05,380.00C613.40,379.88 616.95,379.42 619.55,378.60C622.15,377.78 624.28,376.52 626.65,375.10C629.02,373.68 631.38,372.00 633.75,370.10C636.12,368.20 638.48,366.30 640.85,363.70C643.22,361.10 645.60,357.62 647.95,354.50C650.30,351.38 652.60,348.07 654.95,345.00C657.30,341.93 659.68,338.88 662.05,336.10C664.42,333.32 666.78,330.53 669.15,328.30C671.52,326.07 674.23,324.25 676.25,322.70C678.27,321.15 679.42,320.12 681.25,319.00C683.08,317.88 685.50,317.25 687.25,316.00C689.00,314.75 690.00,313.12 691.75,311.50C693.50,309.88 695.75,307.45 697.75,306.25C699.75,305.05 701.75,304.62 703.75,304.30C705.75,303.98 707.75,303.98 709.75,304.30C711.75,304.62 713.75,305.43 715.75,306.25C717.75,307.07 719.75,307.88 721.75,309.25C723.75,310.62 725.75,312.50 727.75,314.50C729.75,316.50 731.50,318.50 733.75,321.25C736.00,324.00 738.75,327.75 741.25,331.00C743.75,334.25 746.25,337.38 748.75,340.75C751.25,344.12 753.75,347.88 756.25,351.25C758.75,354.62 761.25,358.12 763.75,361.00C766.25,363.88 768.75,366.50 771.25,368.50C773.75,370.50 776.25,371.88 778.75,373.00C781.25,374.12 784.44,374.67 786.25,375.25C788.06,375.83 787.86,375.82 789.60,376.50C791.34,377.18 794.58,378.72 796.70,379.30C798.82,379.88 799.95,380.12 802.30,380.00C804.65,379.88 808.20,379.42 810.80,378.60C813.40,377.78 815.53,376.52 817.90,375.10C820.27,373.68 823.82,370.93 825.00,370.10" stroke="#ec10ec" stroke-width="3"/>
</g>
<path d="M17.00,417.73 L18.00,419.00 L19.00,420.28 L20.00,421.57 L21.00,422.89 L22.00,424.22 L23.00,425.56 L24.00,426.91 L24.50,427.59M24.50,404.39 L25.50,405.76 L26.50,407.14 L27.50,408.52 L28.50,409.91 L29.50,411.31 L30.50,412.70 L31.50,414.10 L32.50,415.49 L33.50,416.89 L34.50,418.28 L35.50,419.66 L36.50,421.04 L37.50,422.41 L38.50,423.77 L39.50,425.11 L40.50,426.45 L41.50,427.77 L42.50,429.08 L43.50,430.37 L44.50,431.64 L45.50,432.89 L46.50,434.12 L47.50,435.33 L48.50,436.51 L49.50,437.67 L50.50,438.80 L51.50,439.91 L52.50,440.98 L53.50,442.03 L54.50,443.05 L55.50,444.03 L56.50,444.98 L57.50,445.90 L58.50,446.78 L59.50,447.63 L60.50,448.44 L61.50,449.21 L62.50,449.94 L63.50,450.63 L64.50,451.29 L65.50,451.90 L66.50,452.47 L67.50,453.00 L68.50,453.48 L69.50,453.93 L70.50,454.33 L71.50,454.68 L72.50,454.99 L73.50,455.25 L74.50,455.47 L75.50,455.65 L76.50,455.78 L77.50,455.86 L78.50,455.90 L79.50,455.89 L80.50,455.83 L81.50,455.73 L82.50,455.59 L83.50,455.40 L84.50,455.16 L85.50,454.88 L86.50,454.55 L87.50,454.18 L88.50,453.77 L89.50,453.31 L90.50,452.81 L91.50,452.26 L92.50,451.67 L93.50,451.05 L94.50,450.38 L95.50,449.67 L96.50,448.92 L97.50,448.14 L98.50,447.32 L99.50,446.46 L100.50,445.56 L101.50,444.63 L102.50,443.67 L103.50,442.67 L104.50,441.64 L105.50,440.58 L106.50,439.50 L107.50,438.38 L108.50,437.24 L109.50,436.07 L110.50,434.88 L111.50,433.66 L112.50,432.42 L113.50,431.16 L114.00,430.53M114.00,453.73 L115.00,452.44 L116.00,451.14 L117.00,449.82 L118.00,448.48 L119.00,447.14 L120.00,445.78 L121.00,444.41 L122.00,443.03 L123.00,441.65 L124.00,440.26 L125.00,438.87 L126.00,437.47 L127.00,436.08 L128.00,434.68 L129.00,433.29 L130.00,431.90 L131.00,430.51 L132.00,429.13 L133.00,427.76 L134.00,426.40 L135.00,425.05 L136.00,423.72 L137.00,422.39 L138.00,421.08 L139.00,419.79 L140.00,418.52 L141.00,417.27 L142.00,416.03 L143.00,414.82 L144.00,413.64 L145.00,412.47 L146.00,411.34 L147.00,410.23 L148.00,409.15 L149.00,408.10 L150.00,407.08 L151.00,406.09 L152.00,405.13 L153.00,404.21 L154.00,403.33 L155.00,402.48 L156.00,401.66 L157.00,400.89 L158.00,400.15 L159.00,399.45 L160.00,398.79 L161.00,398.17 L162.00,397.60 L163.00,397.07 L164.00,396.57 L165.00,396.13 L166.00,395.72 L167.00,395.36 L168.00,395.05 L169.00,394.78 L170.00,394.55 L171.00,394.37 L172.00,394.24 L173.00,394.15 L174.00,394.10 L175.00,394.11 L176.00,394.16 L177.00,394.25 L178.00,394.39 L179.00,394.58 L180.00,394.81 L181.00,395.08 L182.00,395.41 L183.00,395.77 L184.00,396.18 L185.00,396.63 L186.00,397.13 L187.00,397.67 L188.00,398.25 L189.00,398.87 L190.00,399.53 L191.00,400.24 L192.00,400.98 L193.00,401.76 L194.00,402.58 L195.00,403.43 L196.00,404.33 L197.00,405.25 L198.00,406.21 L199.00,407.20 L200.00,408.23 L201.00,409.28 L202.00,410.37 L203.00,411.48 L204.00,412.62 L205.00,413.78 L206.00,414.97 L207.00,416.19 L208.00,417.42 L209.00,418.68 L210.00,419.95 L211.00,421.25 L212.00,422.56 L213.00,423.88 L214.00,425.22 L215.00,426.57 L215.75,427.59M215.75,404.39 L216.75,405.76 L217.75,407.14 L218.75,408.52 L219.75,409.91 L220.75,411.31 L221.75,412.70 L222.75,414.10 L223.75,415.49 L224.75,416.89 L225.75,418.28 L226.75,419.66 L227.75,421.04 L228.75,422.41 L229.75,423.77 L230.75,425.11 L231.75,426.45 L232.75,427.77 L233.75,429.08 L234.75,430.37 L235.75,431.64 L236.75,432.89 L237.75,434.12 L238.75,435.33 L239.75,436.51 L240.75,437.67 L241.75,438.80 L242.75,439.91 L243.75,440.98 L244.75,442.03 L245.75,443.05 L246.75,444.03 L247.75,444.98 L248.75,445.90 L249.75,446.78 L250.75,447.63 L251.75,448.44 L252.75,449.21 L253.75,449.94 L254.75,450.63 L255.75,451.29 L256.75,451.90 L257.75,452.47 L258.75,453.00 L259.75,453.48 L260.75,453.93 L261.75,454.33 L262.75,454.68 L263.75,454.99 L264.75,455.25 L265.75,455.47 L266.75,455.65 L267.75,455.78 L268.75,455.86 L269.75,455.90 L270.75,455.89 L271.75,455.83 L272.75,455.73 L273.75,455.59 L274.75,455.40 L275.75,455.16 L276.75,454.88 L277.75,454.55 L278.75,454.18 L279.75,453.77 L280.75,453.31 L281.75,452.81 L282.75,452.26 L283.75,451.67 L284.75,451.05 L285.75,450.38 L286.75,449.67 L287.75,448.92 L288.75,448.14 L289.75,447.32 L290.75,446.46 L291.75,445.56 L292.75,444.63 L293.75,443.67 L294.75,442.67 L295.75,441.64 L296.75,440.58 L297.75,439.50 L298.75,438.38 L299.75,437.24 L300.75,436.07 L301.75,434.88 L302.75,433.66 L303.75,432.42 L304.75,431.16 L305.25,430.53M305.25,453.73 L306.25,452.44 L307.25,451.14 L308.25,449.82 L309.25,448.48 L310.25,447.14 L311.25,445.78 L312.25,444.41 L313.25,443.03 L314.25,441.65 L315.25,440.26 L316.25,438.87 L317.25,437.47 L318.25,436.08 L319.25,434.68 L320.25,433.29 L321.25,431.90 L322.25,430.51 L323.25,429.13 L324.25,427.76 L325.25,426.40 L326.25,425.05 L327.25,423.72 L328.25,422.39 L329.25,421.08 L330.25,419.79 L331.25,418.52 L332.25,417.27 L333.25,416.03 L334.25,414.82 L335.25,413.64 L336.25,412.47 L337.25,411.34 L338.25,410.23 L339.25,409.15 L340.25,408.10 L341.25,407.08 L342.25,406.09 L343.25,405.13 L344.25,404.21 L345.25,403.33 L346.25,402.48 L347.25,401.66 L348.25,400.89 L349.25,400.15 L350.25,399.45 L351.25,398.79 L352.25,398.17 L353.25,397.60 L354.25,397.07 L355.25,396.57 L356.25,396.13 L357.25,395.72 L358.25,395.36 L359.25,395.05 L360.25,394.78 L361.25,394.55 L362.25,394.37 L363.25,394.24 L364.25,394.15 L365.25,394.10 L366.25,394.11 L367.25,394.16 L368.25,394.25 L369.25,394.39 L370.25,394.58 L371.25,394.81 L372.25,395.08 L373.25,395.41 L374.25,395.77 L375.25,396.18 L376.25,396.63 L377.25,397.13 L378.25,397.67 L379.25,398.25 L380.25,398.87 L381.25,399.53 L382.25,400.24 L383.25,400.98 L384.25,401.76 L385.25,402.58 L386.25,403.43 L387.25,404.33 L388.25,405.25 L389.25,406.21 L390.25,407.20 L391.25,408.23 L392.25,409.28 L393.25,410.37 L394.25,411.48 L395.25,412.62 L396.25,413.78 L397.25,414.97 L398.25,416.19 L399.25,417.42 L400.25,418.68 L401.25,419.95 L402.25,421.25 L403.25,422.56 L404.25,423.88 L405.25,425.22 L406.25,426.57 L407.00,427.59M407.00,404.39 L408.00,405.76 L409.00,407.14 L410.00,408.52 L411.00,409.91 L412.00,411.31 L413.00,412.70 L414.00,414.10 L415.00,415.49 L416.00,416.89 L417.00,418.28 L418.00,419.66 L419.00,421.04 L420.00,422.41 L421.00,423.77 L422.00,425.11 L423.00,426.45 L424.00,427.77 L425.00,429.08 L426.00,430.37 L427.00,431.64 L428.00,432.89 L429.00,434.12 L430.00,435.33 L431.00,436.51 L432.00,437.67 L433.00,438.80 L434.00,439.91 L435.00,440.98 L436.00,442.03 L437.00,443.05 L438.00,444.03 L439.00,444.98 L440.00,445.90 L441.00,446.78 L442.00,447.63 L443.00,448.44 L444.00,449.21 L445.00,449.94 L446.00,450.63 L447.00,451.29 L448.00,451.90 L449.00,452.47 L450.00,453.00 L451.00,453.48 L452.00,453.93 L453.00,454.33 L454.00,454.68 L455.00,454.99 L456.00,455.25 L457.00,455.47 L458.00,455.65 L459.00,455.78 L460.00,455.86 L461.00,455.90 L462.00,455.89 L463.00,455.83 L464.00,455.73 L465.00,455.59 L466.00,455.40 L467.00,455.16 L468.00,454.88 L469.00,454.55 L470.00,454.18 L471.00,453.77 L472.00,453.31 L473.00,452.81 L474.00,452.26 L475.00,451.67 L476.00,451.05 L477.00,450.38 L478.00,449.67 L479.00,448.92 L480.00,448.14 L481.00,447.32 L482.00,446.46 L483.00,445.56 L484.00,444.63 L485.00,443.67 L486.00,442.67 L487.00,441.64 L488.00,440.58 L489.00,439.50 L490.00,438.38 L491.00,437.24 L492.00,436.07 L493.00,434.88 L494.00,433.66 L495.00,432.42 L496.00,431.16 L496.50,430.53M496.50,453.73 L497.50,452.44 L498.50,451.14 L499.50,449.82 L500.50,448.48 L501.50,447.14 L502.50,445.78 L503.50,444.41 L504.50,443.03 L505.50,441.65 L506.50,440.26 L507.50,438.87 L508.50,437.47 L509.50,436.08 L510.50,434.68 L511.50,433.29 L512.50,431.90 L513.50,430.51 L514.50,429.13 L515.50,427.76 L516.50,426.40 L517.50,425.05 L518.50,423.72 L519.50,422.39 L520.50,421.08 L521.50,419.79 L522.50,418.52 L523.50,417.27 L524.50,416.03 L525.50,414.82 L526.50,413.64 L527.50,412.47 L528.50,411.34 L529.50,410.23 L530.50,409.15 L531.50,408.10 L532.50,407.08 L533.50,406.09 L534.50,405.13 L535.50,404.21 L536.50,403.33 L537.50,402.48 L538.50,401.66 L539.50,400.89 L540.50,400.15 L541.50,399.45 L542.50,398.79 L543.50,398.17 L544.50,397.60 L545.50,397.07 L546.50,396.57 L547.50,396.13 L548.50,395.72 L549.50,395.36 L550.50,395.05 L551.50,394.78 L552.50,394.55 L553.50,394.37 L554.50,394.24 L555.50,394.15 L556.50,394.10 L557.50,394.11 L558.50,394.16 L559.50,394.25 L560.50,394.39 L561.50,394.58 L562.50,394.81 L563.50,395.08 L564.50,395.41 L565.50,395.77 L566.50,396.18 L567.50,396.63 L568.50,397.13 L569.50,397.67 L570.50,398.25 L571.50,398.87 L572.50,399.53 L573.50,400.24 L574.50,400.98 L575.50,401.76 L576.50,402.58 L577.50,403.43 L578.50,404.33 L579.50,405.25 L580.50,406.21 L581.50,407.20 L582.50,408.23 L583.50,409.28 L584.50,410.37 L585.50,411.48 L586.50,412.62 L587.50,413.78 L588.50,414.97 L589.50,416.19 L590.50,417.42 L591.50,418.68 L592.50,419.95 L593.50,421.25 L594.50,422.56 L595.50,423.88 L596.50,425.22 L597.50,426.57 L598.25,427.59M598.25,404.39 L599.25,405.76 L600.25,407.14 L601.25,408.52 L602.25,409.91 L603.25,411.31 L604.25,412.70 L605.25,414.10 L606.25,415.49 L607.25,416.89 L608.25,418.28 L609.25,419.66 L610.25,421.04 L611.25,422.41 L612.25,423.77 L613.25,425.11 L614.25,426.45 L615.25,427.77 L616.25,429.08 L617.25,430.37 L618.25,431.64 L619.25,432.89 L620.25,434.12 L621.25,435.33 L622.25,436.51 L623.25,437.67 L624.25,438.80 L625.25,439.91 L626.25,440.98 L627.25,442.03 L628.25,443.05 L629.25,444.03 L630.25,444.98 L631.25,445.90 L632.25,446.78 L633.25,447.63 L634.25,448.44 L635.25,449.21 L636.25,449.94 L637.25,450.63 L638.25,451.29 L639.25,451.90 L640.25,452.47 L641.25,453.00 L642.25,453.48 L643.25,453.93 L644.25,454.33 L645.25,454.68 L646.25,454.99 L647.25,455.25 L648.25,455.47 L649.25,455.65 L650.25,455.78 L651.25,455.86 L652.25,455.90 L653.25,455.89 L654.25,455.83 L655.25,455.73 L656.25,455.59 L657.25,455.40 L658.25,455.16 L659.25,454.88 L660.25,454.55 L661.25,454.18 L662.25,453.77 L663.25,453.31 L664.25,452.81 L665.25,452.26 L666.25,451.67 L667.25,451.05 L668.25,450.38 L669.25,449.67 L670.25,448.92 L671.25,448.14 L672.25,447.32 L673.25,446.46 L674.25,445.56 L675.25,444.63 L676.25,443.67 L677.25,442.67 L678.25,441.64 L679.25,440.58 L680.25,439.50 L681.25,438.38 L682.25,437.24 L683.25,436.07 L684.25,434.88 L685.25,433.66 L686.25,432.42 L687.25,431.16 L687.75,430.53M687.75,453.73 L688.75,452.44 L689.75,451.14 L690.75,449.82 L691.75,448.48 L692.75,447.14 L693.75,445.78 L694.75,444.41 L695.75,443.03 L696.75,441.65 L697.75,440.26 L698.75,438.87 L699.75,437.47 L700.75,436.08 L701.75,434.68 L702.75,433.29 L703.75,431.90 L704.75,430.51 L705.75,429.13 L706.75,427.76 L707.75,426.40 L708.75,425.05 L709.75,423.72 L710.75,422.39 L711.75,421.08 L712.75,419.79 L713.75,418.52 L714.75,417.27 L715.75,416.03 L716.75,414.82 L717.75,413.64 L718.75,412.47 L719.75,411.34 L720.75,410.23 L721.75,409.15 L722.75,408.10 L723.75,407.08 L724.75,406.09 L725.75,405.13 L726.75,404.21 L727.75,403.33 L728.75,402.48 L729.75,401.66 L730.75,400.89 L731.75,400.15 L732.75,399.45 L733.75,398.79 L734.75,398.17 L735.75,397.60 L736.75,397.07 L737.75,396.57 L738.75,396.13 L739.75,395.72 L740.75,395.36 L741.75,395.05 L742.75,394.78 L743.75,394.55 L744.75,394.37 L745.75,394.24 L746.75,394.15 L747.75,394.10 L748.75,394.11 L749.75,394.16 L750.75,394.25 L751.75,394.39 L752.75,394.58 L753.75,394.81 L754.75,395.08 L755.75,395.41 L756.75,395.77 L757.75,396.18 L758.75,396.63 L759.75,397.13 L760.75,397.67 L761.75,398.25 L762.75,398.87 L763.75,399.53 L764.75,400.24 L765.75,400.98 L766.75,401.76 L767.75,402.58 L768.75,403.43 L769.75,404.33 L770.75,405.25 L771.75,406.21 L772.75,407.20 L773.75,408.23 L774.75,409.28 L775.75,410.37 L776.75,411.48 L777.75,412.62 L778.75,413.78 L779.75,414.97 L780.75,416.19 L781.75,417.42 L782.75,418.68 L783.75,419.95 L784.75,421.25 L785.75,422.56 L786.75,423.88 L787.75,425.22 L788.75,426.57 L789.50,427.59M789.50,404.39 L790.50,405.76 L791.50,407.14 L792.50,408.52 L793.50,409.91 L794.50,411.31 L795.50,412.70 L796.50,414.10 L797.00,414.80" stroke="#00b000" stroke-width="6" stroke-opacity="0.4"/>
<path d="M17.00,417.73 L18.00,419.00 L19.00,420.28 L20.00,421.57 L21.00,422.89 L22.00,424.22 L23.00,425.56 L24.00,426.91 L24.50,427.59M24.50,404.39 L25.50,405.76 L26.50,407.14 L27.50,408.52 L28.50,409.91 L29.50,411.31 L30.50,412.70 L31.50,414.10 L32.50,415.49 L33.50,416.89 L34.50,418.28 L35.50,419.66 L36.50,421.04 L37.50,422.41 L38.50,423.77 L39.50,425.11 L40.50,426.45 L41.50,427.77 L42.50,429.08 L43.50,430.37 L44.50,431.64 L45.50,432.89 L46.50,434.12 L47.50,435.33 L48.50,436.51 L49.50,437.67 L50.50,438.80 L51.50,439.91 L52.50,440.98 L53.50,442.03 L54.50,443.05 L55.50,444.03 L56.50,444.98 L57.50,445.90 L58.50,446.78 L59.50,447.63 L60.50,448.44 L61.50,449.21 L62.50,449.94 L63.50,450.63 L64.50,451.29 L65.50,451.90 L66.50,452.47 L67.50,453.00 L68.50,453.48 L69.50,453.93 L70.50,454.33 L71.50,454.68 L72.50,454.99 L73.50,455.25 L74.50,455.47 L75.50,455.65 L76.50,455.78 L77.50,455.86 L78.50,455.90 L79.50,455.89 L80.50,455.83 L81.50,455.73 L82.50,455.59 L83.50,455.40 L84.50,455.16 L85.50,454.88 L86.50,454.55 L87.50,454.18 L88.50,453.77 L89.50,453.31 L90.50,452.81 L91.50,452.26 L92.50,451.67 L93.50,451.05 L94.50,450.38 L95.50,449.67 L96.50,448.92 L97.50,448.14 L98.50,447.32 L99.50,446.46 L100.50,445.56 L101.50,444.63 L102.50,443.67 L103.50,442.67 L104.50,441.64 L105.50,440.58 L106.50,439.50 L107.50,438.38 L108.50,437.24 L109.50,436.07 L110.50,434.88 L111.50,433.66 L112.50,432.42 L113.50,431.16 L114.00,430.53M114.00,453.73 L115.00,452.44 L116.00,451.14 L117.00,449.82 L118.00,448.48 L119.00,447.14 L120.00,445.78 L121.00,444.41 L122.00,443.03 L123.00,441.65 L124.00,440.26 L125.00,438.87 L126.00,437.47 L127.00,436.08 L128.00,434.68 L129.00,433.29 L130.00,431.90 L131.00,430.51 L132.00,429.13 L133.00,427.76 L134.00,426.40 L135.00,425.05 L136.00,423.72 L137.00,422.39 L138.00,421.08 L139.00,419.79 L140.00,418.52 L141.00,417.27 L142.00,416.03 L143.00,414.82 L144.00,413.64 L145.00,412.47 L146.00,411.34 L147.00,410.23 L148.00,409.15 L149.00,408.10 L150.00,407.08 L151.00,406.09 L152.00,405.13 L153.00,404.21 L154.00,403.33 L155.00,402.48 L156.00,401.66 L157.00,400.89 L158.00,400.15 L159.00,399.45 L160.00,398.79 L161.00,398.17 L162.00,397.60 L163.00,397.07 L164.00,396.57 L165.00,396.13 L166.00,395.72 L167.00,395.36 L168.00,395.05 L169.00,394.78 L170.00,394.55 L171.00,394.37 L172.00,394.24 L173.00,394.15 L174.00,394.10 L175.00,394.11 L176.00,394.16 L177.00,394.25 L178.00,394.39 L179.00,394.58 L180.00,394.81 L181.00,395.08 L182.00,395.41 L183.00,395.77 L184.00,396.18 L185.00,396.63 L186.00,397.13 L187.00,397.67 L188.00,398.25 L189.00,398.87 L190.00,399.53 L191.00,400.24 L192.00,400.98 L193.00,401.76 L194.00,402.58 L195.00,403.43 L196.00,404.33 L197.00,405.25 L198.00,406.21 L199.00,407.20 L200.00,408.23 L201.00,409.28 L202.00,410.37 L203.00,411.48 L204.00,412.62 L205.00,413.78 L206.00,414.97 L207.00,416.19 L208.00,417.42 L209.00,418.68 L210.00,419.95 L211.00,421.25 L212.00,422.56 L213.00,423.88 L214.00,425.22 L215.00,426.57 L215.75,427.59M215.75,404.39 L216.75,405.76 L217.75,407.14 L218.75,408.52 L219.75,409.91 L220.75,411.31 L221.75,412.70 L222.75,414.10 L223.75,415.49 L224.75,416.89 L225.75,418.28 L226.75,419.66 L227.75,421.04 L228.75,422.41 L229.75,423.77 L230.75,425.11 L231.75,426.45 L232.75,427.77 L233.75,429.08 L234.75,430.37 L235.75,431.64 L236.75,432.89 L237.75,434.12 L238.75,435.33 L239.75,436.51 L240.75,437.67 L241.75,438.80 L242.75,439.91 L243.75,440.98 L244.75,442.03 L245.75,443.05 L246.75,444.03 L247.75,444.98 L248.75,445.90 L249.75,446.78 L250.75,447.63 L251.75,448.44 L252.75,449.21 L253.75,449.94 L254.75,450.63 L255.75,451.29 L256.75,451.90 L257.75,452.47 L258.75,453.00 L259.75,453.48 L260.75,453.93 L261.75,454.33 L262.75,454.68 L263.75,454.99 L264.75,455.25 L265.75,455.47 L266.75,455.65 L267.75,455.78 L268.75,455.86 L269.75,455.90 L270.75,455.89 L271.75,455.83 L272.75,455.73 L273.75,455.59 L274.75,455.40 L275.75,455.16 L276.75,454.88 L277.75,454.55 L278.75,454.18 L279.75,453.77 L280.75,453.31 L281.75,452.81 L282.75,452.26 L283.75,451.67 L284.75,451.05 L285.75,450.38 L286.75,449.67 L287.75,448.92 L288.75,448.14 L289.75,447.32 L290.75,446.46 L291.75,445.56 L292.75,444.63 L293.75,443.67 L294.75,442.67 L295.75,441.64 L296.75,440.58 L297.75,439.50 L298.75,438.38 L299.75,437.24 L300.75,436.07 L301.75,434.88 L302.75,433.66 L303.75,432.42 L304.75,431.16 L305.25,430.53M305.25,453.73 L306.25,452.44 L307.25,451.14 L308.25,449.82 L309.25,448.48 L310.25,447.14 L311.25,445.78 L312.25,444.41 L313.25,443.03 L314.25,441.65 L315.25,440.26 L316.25,438.87 L317.25,437.47 L318.25,436.08 L319.25,434.68 L320.25,433.29 L321.25,431.90 L322.25,430.51 L323.25,429.13 L324.25,427.76 L325.25,426.40 L326.25,425.05 L327.25,423.72 L328.25,422.39 L329.25,421.08 L330.25,419.79 L331.25,418.52 L332.25,417.27 L333.25,416.03 L334.25,414.82 L335.25,413.64 L336.25,412.47 L337.25,411.34 L338.25,410.23 L339.25,409.15 L340.25,408.10 L341.25,407.08 L342.25,406.09 L343.25,405.13 L344.25,404.21 L345.25,403.33 L346.25,402.48 L347.25,401.66 L348.25,400.89 L349.25,400.15 L350.25,399.45 L351.25,398.79 L352.25,398.17 L353.25,397.60 L354.25,397.07 L355.25,396.57 L356.25,396.13 L357.25,395.72 L358.25,395.36 L359.25,395.05 L360.25,394.78 L361.25,394.55 L362.25,394.37 L363.25,394.24 L364.25,394.15 L365.25,394.10 L366.25,394.11 L367.25,394.16 L368.25,394.25 L369.25,394.39 L370.25,394.58 L371.25,394.81 L372.25,395.08 L373.25,395.41 L374.25,395.77 L375.25,396.18 L376.25,396.63 L377.25,397.13 L378.25,397.67 L379.25,398.25 L380.25,398.87 L381.25,399.53 L382.25,400.24 L383.25,400.98 L384.25,401.76 L385.25,402.58 L386.25,403.43 L387.25,404.33 L388.25,405.25 L389.25,406.21 L390.25,407.20 L391.25,408.23 L392.25,409.28 L393.25,410.37 L394.25,411.48 L395.25,412.62 L396.25,413.78 L397.25,414.97 L398.25,416.19 L399.25,417.42 L400.25,418.68 L401.25,419.95 L402.25,421.25 L403.25,422.56 L404.25,423.88 L405.25,425.22 L406.25,426.57 L407.00,427.59M407.00,404.39 L408.00,405.76 L409.00,407.14 L410.00,408.52 L411.00,409.91 L412.00,411.31 L413.00,412.70 L414.00,414.10 L415.00,415.49 L416.00,416.89 L417.00,418.28 L418.00,419.66 L419.00,421.04 L420.00,422.41 L421.00,423.77 L422.00,425.11 L423.00,426.45 L424.00,427.77 L425.00,429.08 L426.00,430.37 L427.00,431.64 L428.00,432.89 L429.00,434.12 L430.00,435.33 L431.00,436.51 L432.00,437.67 L433.00,438.80 L434.00,439.91 L435.00,440.98 L436.00,442.03 L437.00,443.05 L438.00,444.03 L439.00,444.98 L440.00,445.90 L441.00,446.78 L442.00,447.63 L443.00,448.44 L444.00,449.21 L445.00,449.94 L446.00,450.63 L447.00,451.29 L448.00,451.90 L449.00,452.47 L450.00,453.00 L451.00,453.48 L452.00,453.93 L453.00,454.33 L454.00,454.68 L455.00,454.99 L456.00,455.25 L457.00,455.47 L458.00,455.65 L459.00,455.78 L460.00,455.86 L461.00,455.90 L462.00,455.89 L463.00,455.83 L464.00,455.73 L465.00,455.59 L466.00,455.40 L467.00,455.16 L468.00,454.88 L469.00,454.55 L470.00,454.18 L471.00,453.77 L472.00,453.31 L473.00,452.81 L474.00,452.26 L475.00,451.67 L476.00,451.05 L477.00,450.38 L478.00,449.67 L479.00,448.92 L480.00,448.14 L481.00,447.32 L482.00,446.46 L483.00,445.56 L484.00,444.63 L485.00,443.67 L486.00,442.67 L487.00,441.64 L488.00,440.58 L489.00,439.50 L490.00,438.38 L491.00,437.24 L492.00,436.07 L493.00,434.88 L494.00,433.66 L495.00,432.42 L496.00,431.16 L496.50,430.53M496.50,453.73 L497.50,452.44 L498.50,451.14 L499.50,449.82 L500.50,448.48 L501.50,447.14 L502.50,445.78 L503.50,444.41 L504.50,443.03 L505.50,441.65 L506.50,440.26 L507.50,438.87 L508.50,437.47 L509.50,436.08 L510.50,434.68 L511.50,433.29 L512.50,431.90 L513.50,430.51 L514.50,429.13 L515.50,427.76 L516.50,426.40 L517.50,425.05 L518.50,423.72 L519.50,422.39 L520.50,421.08 L521.50,419.79 L522.50,418.52 L523.50,417.27 L524.50,416.03 L525.50,414.82 L526.50,413.64 L527.50,412.47 L528.50,411.34 L529.50,410.23 L530.50,409.15 L531.50,408.10 L532.50,407.08 L533.50,406.09 L534.50,405.13 L535.50,404.21 L536.50,403.33 L537.50,402.48 L538.50,401.66 L539.50,400.89 L540.50,400.15 L541.50,399.45 L542.50,398.79 L543.50,398.17 L544.50,397.60 L545.50,397.07 L546.50,396.57 L547.50,396.13 L548.50,395.72 L549.50,395.36 L550.50,395.05 L551.50,394.78 L552.50,394.55 L553.50,394.37 L554.50,394.24 L555.50,394.15 L556.50,394.10 L557.50,394.11 L558.50,394.16 L559.50,394.25 L560.50,394.39 L561.50,394.58 L562.50,394.81 L563.50,395.08 L564.50,395.41 L565.50,395.77 L566.50,396.18 L567.50,396.63 L568.50,397.13 L569.50,397.67 L570.50,398.25 L571.50,398.87 L572.50,399.53 L573.50,400.24 L574.50,400.98 L575.50,401.76 L576.50,402.58 L577.50,403.43 L578.50,404.33 L579.50,405.25 L580.50,406.21 L581.50,407.20 L582.50,408.23 L583.50,409.28 L584.50,410.37 L585.50,411.48 L586.50,412.62 L587.50,413.78 L588.50,414.97 L589.50,416.19 L590.50,417.42 L591.50,418.68 L592.50,419.95 L593.50,421.25 L594.50,422.56 L595.50,423.88 L596.50,425.22 L597.50,426.57 L598.25,427.59M598.25,404.39 L599.25,405.76 L600.25,407.14 L601.25,408.52 L602.25,409.91 L603.25,411.31 L604.25,412.70 L605.25,414.10 L606.25,415.49 L607.25,416.89 L608.25,418.28 L609.25,419.66 L610.25,421.04 L611.25,422.41 L612.25,423.77 L613.25,425.11 L614.25,426.45 L615.25,427.77 L616.25,429.08 L617.25,430.37 L618.25,431.64 L619.25,432.89 L620.25,434.12 L621.25,435.33 L622.25,436.51 L623.25,437.67 L624.25,438.80 L625.25,439.91 L626.25,440.98 L627.25,442.03 L628.25,443.05 L629.25,444.03 L630.25,444.98 L631.25,445.90 L632.25,446.78 L633.25,447.63 L634.25,448.44 L635.25,449.21 L636.25,449.94 L637.25,450.63 L638.25,451.29 L639.25,451.90 L640.25,452.47 L641.25,453.00 L642.25,453.48 L643.25,453.93 L644.25,454.33 L645.25,454.68 L646.25,454.99 L647.25,455.25 L648.25,455.47 L649.25,455.65 L650.25,455.78 L651.25,455.86 L652.25,455.90 L653.25,455.89 L654.25,455.83 L655.25,455.73 L656.25,455.59 L657.25,455.40 L658.25,455.16 L659.25,454.88 L660.25,454.55 L661.25,454.18 L662.25,453.77 L663.25,453.31 L664.25,452.81 L665.25,452.26 L666.25,451.67 L667.25,451.05 L668.25,450.38 L669.25,449.67 L670.25,448.92 L671.25,448.14 L672.25,447.32 L673.25,446.46 L674.25,445.56 L675.25,444.63 L676.25,443.67 L677.25,442.67 L678.25,441.64 L679.25,440.58 L680.25,439.50 L681.25,438.38 L682.25,437.24 L683.25,436.07 L684.25,434.88 L685.25,433.66 L686.25,432.42 L687.25,431.16 L687.75,430.53M687.75,453.73 L688.75,452.44 L689.75,451.14 L690.75,449.82 L691.75,448.48 L692.75,447.14 L693.75,445.78 L694.75,444.41 L695.75,443.03 L696.75,441.65 L697.75,440.26 L698.75,438.87 L699.75,437.47 L700.75,436.08 L701.75,434.68 L702.75,433.29 L703.75,431.90 L704.75,430.51 L705.75,429.13 L706.75,427.76 L707.75,426.40 L708.75,425.05 L709.75,423.72 L710.75,422.39 L711.75,421.08 L712.75,419.79 L713.75,418.52 L714.75,417.27 L715.75,416.03 L716.75,414.82 L717.75,413.64 L718.75,412.47 L719.75,411.34 L720.75,410.23 L721.75,409.15 L722.75,408.10 L723.75,407.08 L724.75,406.09 L725.75,405.13 L726.75,404.21 L727.75,403.33 L728.75,402.48 L729.75,401.66 L730.75,400.89 L731.75,400.15 L732.75,399.45 L733.75,398.79 L734.75,398.17 L735.75,397.60 L736.75,397.07 L737.75,396.57 L738.75,396.13 L739.75,395.72 L740.75,395.36 L741.75,395.05 L742.75,394.78 L743.75,394.55 L744.75,394.37 L745.75,394.24 L746.75,394.15 L747.75,394.10 L748.75,394.11 L749.75,394.16 L750.75,394.25 L751.75,394.39 L752.75,394.58 L753.75,394.81 L754.75,395.08 L755.75,395.41 L756.75,395.77 L757.75,396.18 L758.75,396.63 L759.75,397.13 L760.75,397.67 L761.75,398.25 L762.75,398.87 L763.75,399.53 L764.75,400.24 L765.75,400.98 L766.75,401.76 L767.75,402.58 L768.75,403.43 L769.75,404.33 L770.75,405.25 L771.75,406.21 L772.75,407.20 L773.75,408.23 L774.75,409.28 L775.75,410.37 L776.75,411.48 L777.75,412.62 L778.75,413.78 L779.75,414.97 L780.75,416.19 L781.75,417.42 L782.75,418.68 L783.75,419.95 L784.75,421.25 L785.75,422.56 L786.75,423.88 L787.75,425.22 L788.75,426.57 L789.50,427.59M789.50,404.39 L790.50,405.76 L791.50,407.14 L792.50,408.52 L793.50,409.91 L794.50,411.31 L795.50,412.70 L796.50,414.10 L797.00,414.80" stroke="#10e410" stroke-width="3"/>
<path d="M24.50,427.59L24.50,404.39M114.00,430.53L114.00,453.73M215.75,427.59L215.75,404.39M305.25,430.53L305.25,453.73M407.00,427.59L407.00,404.39M496.50,430.53L496.50,453.73M598.25,427.59L598.25,404.39M687.75,430.53L687.75,453.73M789.50,427.59L789.50,404.39" stroke="#10a010" stroke-width="1.1"/>
</g>
<path d="M0.8,104.60 H9.5 L14.6,110.50 L9.5,116.40 H0.8 Z" fill="#000" stroke="#f0f000" stroke-width="1.7" stroke-linejoin="miter"/>
<path d="M6.30,105.90 V114.70 M7.25,106.20 L3.70,108.30" stroke="#f0f000" stroke-width="1.90" fill="none" stroke-linecap="butt"/>
<path d="M0.8,256.80 H9.5 L14.6,262.70 L9.5,268.60 H0.8 Z" fill="#000" stroke="#10e0e0" stroke-width="1.7" stroke-linejoin="miter"/>
<text x="2.4" y="267.10" font-weight="bold" font-size="12.5" fill="#10e0e0">2</text>
<path d="M0.8,337.50 H9.5 L14.6,343.40 L9.5,349.30 H0.8 Z" fill="#000" stroke="#e818e8" stroke-width="1.7" stroke-linejoin="miter"/>
<text x="2.4" y="347.80" font-weight="bold" font-size="12.5" fill="#e818e8">3</text>
<path d="M0.8,418.10 H9.5 L14.6,424.00 L9.5,429.90 H0.8 Z" fill="#22cc22" stroke="#22cc22" stroke-width="1.7" stroke-linejoin="miter"/>
<text x="2.4" y="428.40" font-weight="bold" font-size="12.5" fill="#000">4</text>
<path d="M789,105.8 L794.5,100.8 L794.5,104.6 L797.5,104.6 L797.5,107 L794.5,107 L794.5,110.8 Z" fill="#f0f000"/>
<path d="M404.8,0.5 H409.8 L407.3,3 Z" fill="#f5a500"/>
<rect x="404.3" y="3.5" width="6" height="8" rx="1.5" fill="#f5a500"/>
<rect x="406.6" y="5" width="1.4" height="5" fill="#000"/>
<path d="M403,13 H412 L407.5,17.8 Z" fill="#f5a500"/>
<path d="M402,19.5 Q402,18.3 403.5,18.3 H411 Q412.5,18.3 412.5,19.5 V27 L407.3,31 L402,27 Z" fill="#f5a500"/>
<path d="M404.5,20.5 H410 V22.3 H408.1 V28 H406.4 V22.3 H404.5 Z" fill="#000"/>
<rect x="16.0" y="524.2" width="432.5" height="15.4" rx="5.0" fill="#000" stroke="#b4b4c8" stroke-width="1.3"/>
<rect x="16.0" y="541.0" width="432.0" height="29.3" rx="5.0" fill="#000" stroke="#b4b4c8" stroke-width="1.3"/>
<rect x="457.0" y="523.6" width="114.5" height="28.8" rx="5.0" fill="#000" stroke="#b4b4c8" stroke-width="1.3"/>
<rect x="578.8" y="523.6" width="83.2" height="28.8" rx="5.0" fill="#000" stroke="#b4b4c8" stroke-width="1.3"/>
<rect x="669.8" y="523.6" width="128.0" height="28.8" rx="5.0" fill="#000" stroke="#b4b4c8" stroke-width="1.3"/>
<rect x="710.6" y="569.2" width="87.2" height="28.8" rx="5.0" fill="#000" stroke="#b4b4c8" stroke-width="1.3"/>
<rect x="20.2" y="525.9" width="19.6" height="12.2" rx="6.1" ry="6.1" fill="#f0f000"/>
<path d="M30.30,527.80 V536.30 M31.25,528.10 L27.70,530.20" stroke="#000" stroke-width="1.90" fill="none" stroke-linecap="butt"/>
<text x="54.7" y="536.0" font-size="12.0" fill="#f0f000" stroke="#f0f000" stroke-width="0.50" textLength="37.5" lengthAdjust="spacing">1.00 V</text>
<text x="112.0" y="532" font-size="6.5" fill="#c8c800">B</text>
<text x="114.0" y="536" font-size="6.5" fill="#c8c800">W</text>
<rect x="128.8" y="525.9" width="19.6" height="12.2" rx="6.1" ry="6.1" fill="#10e0e0"/>
<text x="138.8" y="536.2" font-weight="bold" font-size="11.6" fill="#000" text-anchor="middle">2</text>
<text x="162.0" y="536.0" font-size="12.0" fill="#10e0e0" stroke="#10e0e0" stroke-width="0.50" textLength="42.0" lengthAdjust="spacing">500mV</text>
<text x="221.0" y="532" font-size="6.5" fill="#10b8b8">B</text>
<text x="223.0" y="536" font-size="6.5" fill="#10b8b8">W</text>
<rect x="238.0" y="525.9" width="19.6" height="12.2" rx="6.1" ry="6.1" fill="#b010b0"/>
<text x="248.0" y="536.2" font-weight="bold" font-size="11.6" fill="#000" text-anchor="middle">3</text>
<text x="271.0" y="536.0" font-size="12.0" fill="#c020c0" stroke="#c020c0" stroke-width="0.50" textLength="41.0" lengthAdjust="spacing">500mV</text>
<text x="329.5" y="532" font-size="6.5" fill="#b010b0">B</text>
<text x="331.5" y="536" font-size="6.5" fill="#b010b0">W</text>
<rect x="346.0" y="525.9" width="19.6" height="12.2" rx="6.1" ry="6.1" fill="#10b010"/>
<text x="356.0" y="536.2" font-weight="bold" font-size="11.6" fill="#000" text-anchor="middle">4</text>
<text x="379.0" y="536.0" font-size="12.0" fill="#10b010" stroke="#10b010" stroke-width="0.50" textLength="42.0" lengthAdjust="spacing">500mV</text>
<text x="438.0" y="532" font-size="6.5" fill="#10b010">B</text>
<text x="440.0" y="536" font-size="6.5" fill="#10b010">W</text>
<text x="123.0" y="553.0" font-size="12.0" fill="#e8e8e8" stroke="#e8e8e8" stroke-width="0.50" textLength="33.6" lengthAdjust="spacing">Value</text>
<text x="192.4" y="553.0" font-size="12.0" fill="#e8e8e8" stroke="#e8e8e8" stroke-width="0.50" textLength="32.0" lengthAdjust="spacing">Mean</text>
<text x="257.0" y="553.0" font-size="12.0" fill="#e8e8e8" stroke="#e8e8e8" stroke-width="0.50" textLength="23.0" lengthAdjust="spacing">Min</text>
<text x="321.0" y="553.0" font-size="12.0" fill="#e8e8e8" stroke="#e8e8e8" stroke-width="0.50" textLength="24.0" lengthAdjust="spacing">Max</text>
<text x="385.0" y="553.0" font-size="12.0" fill="#e8e8e8" stroke="#e8e8e8" stroke-width="0.50" textLength="47.0" lengthAdjust="spacing">Std Dev</text>
<rect x="20.2" y="557.8" width="19.6" height="12.0" rx="6.0" ry="6.0" fill="#f0f000"/>
<path d="M30.30,559.70 V568.00 M31.25,560.00 L27.70,562.10" stroke="#000" stroke-width="1.90" fill="none" stroke-linecap="butt"/>
<text x="43.7" y="567.0" font-size="12.0" fill="#f0f000" stroke="#f0f000" stroke-width="0.50" textLength="64.5" lengthAdjust="spacing">Frequency</text>
<text x="125.0" y="567.0" font-size="12.0" fill="#f0f000" stroke="#f0f000" stroke-width="0.50" textLength="57.0" lengthAdjust="spacing">1.022kHz</text>
<text x="193.0" y="567.0" font-size="12.0" fill="#f0f000" stroke="#f0f000" stroke-width="0.50" textLength="42.0" lengthAdjust="spacing">1.001k</text>
<text x="257.0" y="567.0" font-size="12.0" fill="#f0f000" stroke="#f0f000" stroke-width="0.50" textLength="34.0" lengthAdjust="spacing">953.3</text>
<text x="321.0" y="567.0" font-size="12.0" fill="#f0f000" stroke="#f0f000" stroke-width="0.50" textLength="42.0" lengthAdjust="spacing">1.022k</text>
<text x="385.0" y="567.0" font-size="12.0" fill="#f0f000" stroke="#f0f000" stroke-width="0.50" textLength="34.0" lengthAdjust="spacing">31.83</text>
<text x="461.0" y="536.0" font-size="12.0" fill="#e8e8e8" stroke="#e8e8e8" stroke-width="0.50" textLength="38.0" lengthAdjust="spacing">400µs</text>
<rect x="460" y="539.8" width="9.8" height="10" rx="1.5" fill="#f5a500"/>
<path d="M462,541.5 H468 V543.2 H465.8 V548.5 H464.2 V543.2 H462 Z" fill="#000"/>
<path d="M470,544.3 H475 M473.5,542.3 L476.5,544.6 L473.5,546.9" stroke="#f5a500" stroke-width="1.4" fill="#f5a500"/>
<path d="M478,542 H487 L482.5,547.2 Z" fill="#f5a500"/>
<text x="488.0" y="549.5" font-size="12.0" fill="#f5a500" stroke="#f5a500" stroke-width="0.50" textLength="59.5" lengthAdjust="spacing">0.00000 s</text>
<text x="584.0" y="536.0" font-size="12.0" fill="#e8e8e8" stroke="#e8e8e8" stroke-width="0.50" textLength="58.7" lengthAdjust="spacing">25.0MS/s</text>
<text x="584.0" y="549.5" font-size="12.0" fill="#e8e8e8" stroke="#e8e8e8" stroke-width="0.50" textLength="74.6" lengthAdjust="spacing">100k points</text>
<rect x="694.4" y="526.4" width="19.6" height="11.8" rx="5.9" ry="5.9" fill="#f0f000"/>
<path d="M704.50,528.30 V536.40 M705.45,528.60 L701.90,530.70" stroke="#000" stroke-width="1.90" fill="none" stroke-linecap="butt"/>
<path d="M726,535.5 H728.5 L731.5,527.5 H734" stroke="#fff" stroke-width="1.5" fill="none"/>
<text x="744.0" y="536.0" font-size="12.0" fill="#e8e8e8" stroke="#e8e8e8" stroke-width="0.50" textLength="46.0" lengthAdjust="spacing">80.0mV</text>
<text x="715.0" y="583.0" font-size="12.0" fill="#e8e8e8" stroke="#e8e8e8" stroke-width="0.50" textLength="79.0" lengthAdjust="spacing">28 Nov 2016</text>
<text x="715.0" y="595.0" font-size="12.0" fill="#e8e8e8" stroke="#e8e8e8" stroke-width="0.50" textLength="55.0" lengthAdjust="spacing">23:22:06</text>
</svg></body></html>
